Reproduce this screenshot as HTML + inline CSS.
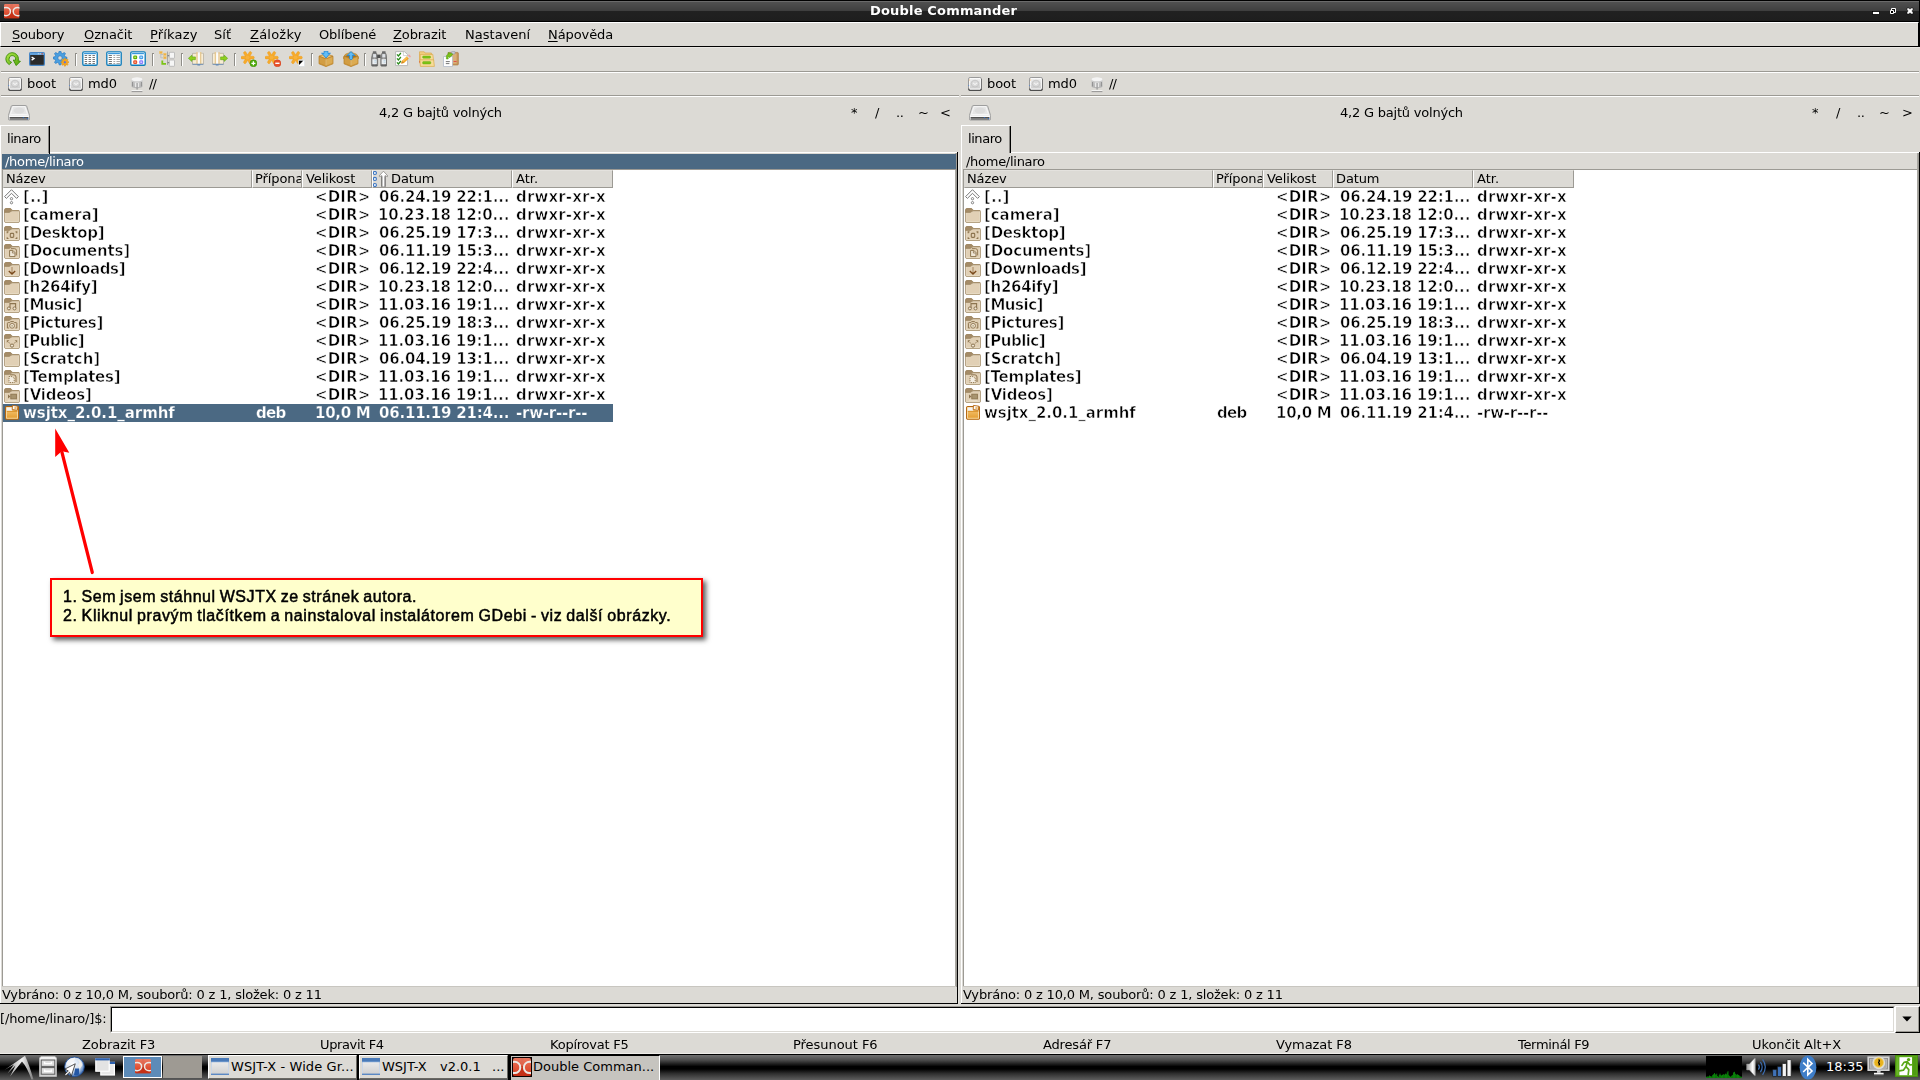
<!DOCTYPE html>
<html lang="cs"><head><meta charset="utf-8"><title>Double Commander</title>
<style>
html,body{margin:0;padding:0;}
body{width:1920px;height:1080px;overflow:hidden;background:#dcdad5;position:relative;font-family:"DejaVu Sans","Liberation Sans",sans-serif;font-size:13px;color:#000;}
div,span,svg{position:absolute;box-sizing:border-box;}
#root{left:0;top:0;width:1920px;height:1080px;}
.t,.b,.tb{will-change:transform;white-space:pre;}
.t{line-height:16px;height:16px;}
.tb{line-height:16px;height:16px;font-weight:bold;}
.b{font-weight:bold;font-size:15px;line-height:18px;height:18px;top:0;-webkit-text-stroke:0.6px #fff;}
.b.w{-webkit-text-stroke:0.25px #4b6983;}
.row{height:18px;overflow:hidden;}
.w{color:#fff;}
.hc{top:170px;height:18px;border-top:1px solid #e4e2de;border-left:1px solid #fff;border-right:1px solid #9c9a94;border-bottom:1px solid #9c9a94;background:#dcdad5;overflow:hidden;}
u{text-decoration:underline;text-decoration-thickness:1px;text-underline-offset:2px;text-decoration-skip-ink:none;}
.tk{white-space:pre;line-height:16px;height:16px;}
.an{font-family:"Liberation Sans",sans-serif;font-size:16px;line-height:19px;height:19px;-webkit-text-stroke:0.5px #000;word-spacing:-1px;}
</style></head>
<body>
<div id="root">
<div style="left:0px;top:0px;width:1920px;height:22px;background:linear-gradient(#000 0,#000 1px,#6a6a6a 1px,#6a6a6a 2px,#505050 2px,#3e3e3e 11px,#212121 11px,#1e1e1e 21px,#000 21px);"></div>
<svg style="left:4px;top:4px;" width="15.5" height="14.5" viewBox="0 0 20 20" preserveAspectRatio="none"><defs><linearGradient id="dc1g_1" x1="0" y1="0" x2="0" y2="1"><stop offset="0" stop-color="#ea7a63"/><stop offset="0.5" stop-color="#e2583c"/><stop offset="1" stop-color="#d2381c"/></linearGradient><clipPath id="dc1c_1"><rect x="0" y="0" width="20" height="20" rx="1.8"/></clipPath></defs><g clip-path="url(#dc1c_1)"><rect x="0" y="0" width="20" height="20" fill="url(#dc1g_1)"/><path d="M0,20 L10,8.5 L20,20 Z" fill="#c22e14" opacity="0.85"/><path d="M10,0 V8.5" stroke="#d86a55" stroke-width="3" opacity="0.5"/><circle cx="2.6" cy="10.4" r="5.7" fill="none" stroke="#ece8e4" stroke-width="2"/><circle cx="17.6" cy="10.4" r="5.7" fill="none" stroke="#ece8e4" stroke-width="2"/></g></svg>
<div class="tb w" style="left:870px;top:3px;letter-spacing:0.180px;">Double Commander</div>
<svg style="left:1860px;top:0px;" width="60" height="22" viewBox="1860 0 60 22"><rect x="1872.5" y="11.5" width="7" height="3" fill="#fff" stroke="#000" stroke-width="0.8"/><path d="M1891.5,8.5 h4 v4 h-4 z" fill="#111" stroke="#fff" stroke-width="1"/><path d="M1890.5,10.5 h3 v3 h-3 z" fill="#000" stroke="#fff" stroke-width="1"/><path d="M1907,8 h2 l1,1.2 l1,-1.2 h2 v2 l-1.2,1 l1.2,1 v2 h-2 l-1,-1.2 l-1,1.2 h-2 v-2 l1.2,-1 l-1.2,-1 z" fill="#fff" stroke="#000" stroke-width="0.5"/></svg>
<div style="left:1919px;top:0px;width:1px;height:47px;background:#000;"></div>
<div style="left:0px;top:22px;width:1919px;height:25px;background:#dcdad5;border-top:1px solid #fff;border-left:1px solid #fff;border-bottom:1px solid #000;border-right:1px solid #000;"></div>
<div class="t" style="left:12px;top:27px;letter-spacing:-0.220px;"><u>S</u>oubory</div>
<div class="t" style="left:84px;top:27px;letter-spacing:-0.117px;"><u>O</u>značit</div>
<div class="t" style="left:150px;top:27px;letter-spacing:0.180px;"><u>P</u>říkazy</div>
<div class="t" style="left:214px;top:27px;letter-spacing:0.016px;">Síť</div>
<div class="t" style="left:250px;top:27px;letter-spacing:0.228px;"><u>Z</u>áložky</div>
<div class="t" style="left:319px;top:27px;letter-spacing:-0.126px;">Oblíbené</div>
<div class="t" style="left:393px;top:27px;letter-spacing:-0.086px;"><u>Z</u>obrazit</div>
<div class="t" style="left:465px;top:27px;letter-spacing:0.018px;">N<u>a</u>stavení</div>
<div class="t" style="left:548px;top:27px;letter-spacing:-0.083px;"><u>N</u>ápověda</div>
<div style="left:0px;top:47px;width:1920px;height:1px;background:#e9e7e3;"></div>
<div style="left:1px;top:71px;width:1918px;height:1px;background:#9c9a94;"></div>
<div style="left:1px;top:72px;width:1918px;height:1px;background:#fff;"></div>
<svg style="left:5px;top:51px;" width="16" height="16" viewBox="0 0 16 16"><defs><linearGradient id="rg_2" x1="0" y1="0" x2="1" y2="1"><stop offset="0" stop-color="#b5e94a"/><stop offset="1" stop-color="#4fa40a"/></linearGradient></defs><path d="M4.3,13.6 A6.3,6.3 0 1 1 13.2,9.8 L15.4,10.3 L11.2,14.6 L8.3,9 L10.4,9.4 A3.3,3.3 0 1 0 6.6,11.2 Z" fill="url(#rg_2)" stroke="#3c8d07" stroke-width="0.9" stroke-linejoin="round"/></svg>
<svg style="left:29px;top:51px;" width="16" height="16" viewBox="0 0 16 16"><rect x="0.5" y="1.5" width="15" height="13" rx="0.8" fill="#63a3dd" stroke="#4a86c4"/><rect x="1.2" y="4" width="13.6" height="9.8" fill="#2a2a2a"/><rect x="12.6" y="2.2" width="1.2" height="1.2" fill="#e84a2a"/><rect x="10.7" y="2.2" width="1" height="1.1" fill="#cfe3f5"/><rect x="8.8" y="2.2" width="1" height="1.1" fill="#cfe3f5"/><path d="M2.6,6 L5,7.6 L2.6,9.2" stroke="#fff" stroke-width="1.4" fill="none"/></svg>
<svg style="left:53px;top:51px;" width="16" height="16" viewBox="0 0 16 16"><path d="M13.97,6.31 L13.97,7.69 L11.78,8.45 L11.41,9.36 L12.41,11.44 L11.44,12.41 L9.36,11.41 L8.45,11.78 L7.69,13.97 L6.31,13.97 L5.55,11.78 L4.64,11.41 L2.56,12.41 L1.59,11.44 L2.59,9.36 L2.22,8.45 L0.03,7.69 L0.03,6.31 L2.22,5.55 L2.59,4.64 L1.59,2.56 L2.56,1.59 L4.64,2.59 L5.55,2.22 L6.31,0.03 L7.69,0.03 L8.45,2.22 L9.36,2.59 L11.44,1.59 L12.41,2.56 L11.41,4.64 L11.78,5.55 Z M4.80,7.00 a2.20,2.20 0 1 0 4.40,0 a2.20,2.20 0 1 0 -4.40,0 Z" fill="#4a9fe0" stroke="#2b78c2" stroke-width="0.7" fill-rule="evenodd"/><path d="M15.88,10.81 L15.88,11.59 L14.58,12.01 L14.37,12.52 L14.99,13.74 L14.44,14.29 L13.22,13.67 L12.71,13.88 L12.29,15.18 L11.51,15.18 L11.09,13.88 L10.58,13.67 L9.36,14.29 L8.81,13.74 L9.43,12.52 L9.22,12.01 L7.92,11.59 L7.92,10.81 L9.22,10.39 L9.43,9.88 L8.81,8.66 L9.36,8.11 L10.58,8.73 L11.09,8.52 L11.51,7.22 L12.29,7.22 L12.71,8.52 L13.22,8.73 L14.44,8.11 L14.99,8.66 L14.37,9.88 L14.58,10.39 Z M10.90,11.20 a1.00,1.00 0 1 0 2.00,0 a1.00,1.00 0 1 0 -2.00,0 Z" fill="#f5a623" stroke="#e08e0b" stroke-width="0.5" fill-rule="evenodd"/><circle cx="11.9" cy="11.2" r="1" fill="#5a6ee8"/></svg>
<svg style="left:82px;top:51px;" width="16" height="16" viewBox="0 0 16 16"><rect x="0.8" y="0.8" width="14.4" height="13.4" rx="1.2" fill="#fff" stroke="#0f7cba" stroke-width="1.35"/><rect x="1.6" y="1.6" width="12.8" height="1.8" fill="#9fd4f2"/><rect x="2.2" y="2.1" width="11.6" height="0.9" fill="#2f8fd8"/><rect x="2.6" y="4.2" width="2.6" height="0.9" rx="0.4" fill="#4a4a4a"/><rect x="6.5" y="4.2" width="2.6" height="0.9" rx="0.4" fill="#4a4a4a"/><rect x="10.4" y="4.2" width="2.6" height="0.9" rx="0.4" fill="#4a4a4a"/><rect x="2.6" y="6.2" width="2.6" height="0.9" rx="0.4" fill="#4a4a4a"/><rect x="6.5" y="6.2" width="2.6" height="0.9" rx="0.4" fill="#4a4a4a"/><rect x="10.4" y="6.2" width="2.6" height="0.9" rx="0.4" fill="#4a4a4a"/><rect x="2.6" y="8.2" width="2.6" height="0.9" rx="0.4" fill="#4a4a4a"/><rect x="6.5" y="8.2" width="2.6" height="0.9" rx="0.4" fill="#4a4a4a"/><rect x="10.4" y="8.2" width="2.6" height="0.9" rx="0.4" fill="#4a4a4a"/><rect x="2.6" y="10.2" width="2.6" height="0.9" rx="0.4" fill="#4a4a4a"/><rect x="6.5" y="10.2" width="2.6" height="0.9" rx="0.4" fill="#4a4a4a"/><rect x="10.4" y="10.2" width="2.6" height="0.9" rx="0.4" fill="#4a4a4a"/><rect x="2.6" y="12.2" width="2.6" height="0.9" rx="0.4" fill="#4a4a4a"/><rect x="6.5" y="12.2" width="2.6" height="0.9" rx="0.4" fill="#4a4a4a"/><rect x="10.4" y="12.2" width="2.6" height="0.9" rx="0.4" fill="#4a4a4a"/></svg>
<svg style="left:106px;top:51px;" width="16" height="16" viewBox="0 0 16 16"><rect x="0.8" y="0.8" width="14.4" height="13.4" rx="1.2" fill="#fff" stroke="#0f7cba" stroke-width="1.35"/><rect x="1.6" y="1.6" width="12.8" height="1.8" fill="#9fd4f2"/><rect x="2.2" y="2.1" width="11.6" height="0.9" fill="#2f8fd8"/><rect x="2.6" y="4.2" width="3.4" height="0.9" rx="0.4" fill="#4a4a4a"/><rect x="7.3" y="4.2" width="2" height="0.9" rx="0.4" fill="#8a8a8a"/><rect x="10.4" y="4.2" width="3.6" height="0.9" rx="0.4" fill="#8a8a8a"/><rect x="2.6" y="6.2" width="3.4" height="0.9" rx="0.4" fill="#4a4a4a"/><rect x="7.3" y="6.2" width="2" height="0.9" rx="0.4" fill="#8a8a8a"/><rect x="10.4" y="6.2" width="3.6" height="0.9" rx="0.4" fill="#8a8a8a"/><rect x="2.6" y="8.2" width="3.4" height="0.9" rx="0.4" fill="#4a4a4a"/><rect x="7.3" y="8.2" width="2" height="0.9" rx="0.4" fill="#8a8a8a"/><rect x="10.4" y="8.2" width="3.6" height="0.9" rx="0.4" fill="#8a8a8a"/><rect x="2.6" y="10.2" width="3.4" height="0.9" rx="0.4" fill="#4a4a4a"/><rect x="7.3" y="10.2" width="2" height="0.9" rx="0.4" fill="#8a8a8a"/><rect x="10.4" y="10.2" width="3.6" height="0.9" rx="0.4" fill="#8a8a8a"/><rect x="2.6" y="12.2" width="3.4" height="0.9" rx="0.4" fill="#4a4a4a"/><rect x="7.3" y="12.2" width="2" height="0.9" rx="0.4" fill="#8a8a8a"/><rect x="10.4" y="12.2" width="3.6" height="0.9" rx="0.4" fill="#8a8a8a"/></svg>
<svg style="left:130px;top:51px;" width="16" height="16" viewBox="0 0 16 16"><rect x="0.8" y="0.8" width="14.4" height="13.4" rx="1.2" fill="#fff" stroke="#0f7cba" stroke-width="1.35"/><rect x="1.6" y="1.6" width="12.8" height="1.8" fill="#9fd4f2"/><rect x="2.2" y="2.1" width="11.6" height="0.9" fill="#2f8fd8"/><rect x="3.2" y="4.4" width="4" height="3.8" rx="1.3" fill="#5fb100"/><rect x="4.3" y="5.6" width="1.8" height="1.4" fill="#bfe36a"/><rect x="9.2" y="4.4" width="4" height="3.8" rx="1.3" fill="#4a9ee6"/><rect x="10.3" y="5.6" width="1.8" height="1.4" fill="#a8dcff"/><rect x="3.2" y="9.3" width="4" height="3.8" rx="1.3" fill="#e8512a"/><rect x="4.3" y="10.5" width="1.8" height="1.4" fill="#f5a58a"/><rect x="9.2" y="9.3" width="4" height="3.8" rx="1.3" fill="#8a7bff"/><rect x="10.3" y="10.5" width="1.8" height="1.4" fill="#d6d0ff"/></svg>
<svg style="left:159px;top:51px;" width="16" height="16" viewBox="0 0 16 16"><rect x="0.4" y="0.3" width="2.8" height="2.4" fill="#f3b03f" stroke="#e9c77a" stroke-width="0.5"/><rect x="4.6" y="2.2" width="2.6" height="2.3" fill="#f3b03f" stroke="#e9c77a" stroke-width="0.5"/><rect x="4.6" y="5.6" width="2.6" height="2.3" fill="#f3b03f" stroke="#e9c77a" stroke-width="0.5"/><path d="M1.8,2.8 V6.8 H4.4 M1.8,3.5 H4.4" stroke="#b9b9b9" stroke-width="0.8" fill="none"/><path d="M3.3,9.5 V12.9 H7" stroke="#7cc416" stroke-width="1.8" fill="none"/><path d="M8.5,0.5 V14" stroke="#9a9a9a" stroke-width="0.8"/><rect x="10.3" y="1.3" width="5.2" height="6" rx="0.6" fill="#f6f6f6" stroke="#b2b2b2" stroke-width="0.8"/><rect x="10.3" y="9" width="5.2" height="6.3" rx="0.6" fill="#f6f6f6" stroke="#b2b2b2" stroke-width="0.8"/><rect x="8.6" y="4.3" width="1.6" height="0.9" fill="#666"/><rect x="8.6" y="11.3" width="1.6" height="0.9" fill="#666"/></svg>
<svg style="left:188px;top:51px;" width="16" height="16" viewBox="0 0 16 16"><path d="M4.6,2.4 H15.3 V13 H4.6 Z" fill="#f1dfbb" stroke="#a9a295" stroke-width="0.7"/><rect x="8.2" y="1" width="1.6" height="12" fill="#e6c994"/><rect x="11.9" y="1" width="1.6" height="12" fill="#e6c994"/><rect x="9.8" y="1.4" width="2.1" height="11.4" fill="#fbfbfb"/><rect x="13.5" y="2.6" width="1.4" height="10" fill="#f9efdb"/><rect x="5" y="2.8" width="3.2" height="10" fill="#f7ecd2"/><path d="M4.4,13.3 H15.4" stroke="#6f8fb4" stroke-width="1"/><path d="M9.4,14 H12.2" stroke="#4f7fb5" stroke-width="0.9"/><path d="M0.4,7.3 L3.8,4.2 V5.9 H7.4 V8.7 H3.8 V10.4 Z" fill="#8fd01e" stroke="#5ba60c" stroke-width="0.6" stroke-linejoin="round"/></svg>
<svg style="left:212px;top:51px;" width="16" height="16" viewBox="0 0 16 16"><g transform="translate(16,0) scale(-1,1)"><path d="M4.6,2.4 H15.3 V13 H4.6 Z" fill="#f1dfbb" stroke="#a9a295" stroke-width="0.7"/><rect x="8.2" y="1" width="1.6" height="12" fill="#e6c994"/><rect x="11.9" y="1" width="1.6" height="12" fill="#e6c994"/><rect x="9.8" y="1.4" width="2.1" height="11.4" fill="#fbfbfb"/><rect x="13.5" y="2.6" width="1.4" height="10" fill="#f9efdb"/><rect x="5" y="2.8" width="3.2" height="10" fill="#f7ecd2"/><path d="M4.4,13.3 H15.4" stroke="#6f8fb4" stroke-width="1"/><path d="M9.4,14 H12.2" stroke="#4f7fb5" stroke-width="0.9"/><path d="M0.4,7.3 L3.8,4.2 V5.9 H7.4 V8.7 H3.8 V10.4 Z" fill="#8fd01e" stroke="#5ba60c" stroke-width="0.6" stroke-linejoin="round"/></g></svg>
<svg style="left:241px;top:51px;" width="16" height="16" viewBox="0 0 16 16"><rect x="-1.35" y="-6.7" width="2.7" height="6.2" rx="1.3" fill="#f6ab2c" stroke="#ec9a1c" stroke-width="0.4" transform="translate(6.6,6.6) rotate(30)"/><rect x="-1.35" y="-6.7" width="2.7" height="6.2" rx="1.3" fill="#f6ab2c" stroke="#ec9a1c" stroke-width="0.4" transform="translate(6.6,6.6) rotate(90)"/><rect x="-1.35" y="-6.7" width="2.7" height="6.2" rx="1.3" fill="#f6ab2c" stroke="#ec9a1c" stroke-width="0.4" transform="translate(6.6,6.6) rotate(150)"/><rect x="-1.35" y="-6.7" width="2.7" height="6.2" rx="1.3" fill="#f6ab2c" stroke="#ec9a1c" stroke-width="0.4" transform="translate(6.6,6.6) rotate(210)"/><rect x="-1.35" y="-6.7" width="2.7" height="6.2" rx="1.3" fill="#f6ab2c" stroke="#ec9a1c" stroke-width="0.4" transform="translate(6.6,6.6) rotate(270)"/><rect x="-1.35" y="-6.7" width="2.7" height="6.2" rx="1.3" fill="#f6ab2c" stroke="#ec9a1c" stroke-width="0.4" transform="translate(6.6,6.6) rotate(330)"/><circle cx="6.6" cy="6.6" r="2" fill="#f7b13c"/><circle cx="12.4" cy="12.3" r="3.5" fill="#4eaa0c" stroke="#3d8d07" stroke-width="0.5"/><path d="M10.4,12.3 h4 M12.4,10.3 v4" stroke="#fff" stroke-width="1.3"/></svg>
<svg style="left:265px;top:51px;" width="16" height="16" viewBox="0 0 16 16"><rect x="-1.35" y="-6.7" width="2.7" height="6.2" rx="1.3" fill="#f6ab2c" stroke="#ec9a1c" stroke-width="0.4" transform="translate(6.6,6.6) rotate(30)"/><rect x="-1.35" y="-6.7" width="2.7" height="6.2" rx="1.3" fill="#f6ab2c" stroke="#ec9a1c" stroke-width="0.4" transform="translate(6.6,6.6) rotate(90)"/><rect x="-1.35" y="-6.7" width="2.7" height="6.2" rx="1.3" fill="#f6ab2c" stroke="#ec9a1c" stroke-width="0.4" transform="translate(6.6,6.6) rotate(150)"/><rect x="-1.35" y="-6.7" width="2.7" height="6.2" rx="1.3" fill="#f6ab2c" stroke="#ec9a1c" stroke-width="0.4" transform="translate(6.6,6.6) rotate(210)"/><rect x="-1.35" y="-6.7" width="2.7" height="6.2" rx="1.3" fill="#f6ab2c" stroke="#ec9a1c" stroke-width="0.4" transform="translate(6.6,6.6) rotate(270)"/><rect x="-1.35" y="-6.7" width="2.7" height="6.2" rx="1.3" fill="#f6ab2c" stroke="#ec9a1c" stroke-width="0.4" transform="translate(6.6,6.6) rotate(330)"/><circle cx="6.6" cy="6.6" r="2" fill="#f7b13c"/><circle cx="12.4" cy="12.3" r="3.5" fill="#e8512a" stroke="#cf3d18" stroke-width="0.5"/><path d="M10.3,12.3 h4.2" stroke="#fff" stroke-width="1.4"/></svg>
<svg style="left:289px;top:51px;" width="16" height="16" viewBox="0 0 16 16"><rect x="-1.35" y="-6.7" width="2.7" height="6.2" rx="1.3" fill="#f6ab2c" stroke="#ec9a1c" stroke-width="0.4" transform="translate(6.6,6.6) rotate(30)"/><rect x="-1.35" y="-6.7" width="2.7" height="6.2" rx="1.3" fill="#f6ab2c" stroke="#ec9a1c" stroke-width="0.4" transform="translate(6.6,6.6) rotate(90)"/><rect x="-1.35" y="-6.7" width="2.7" height="6.2" rx="1.3" fill="#f6ab2c" stroke="#ec9a1c" stroke-width="0.4" transform="translate(6.6,6.6) rotate(150)"/><rect x="-1.35" y="-6.7" width="2.7" height="6.2" rx="1.3" fill="#f6ab2c" stroke="#ec9a1c" stroke-width="0.4" transform="translate(6.6,6.6) rotate(210)"/><rect x="-1.35" y="-6.7" width="2.7" height="6.2" rx="1.3" fill="#f6ab2c" stroke="#ec9a1c" stroke-width="0.4" transform="translate(6.6,6.6) rotate(270)"/><rect x="-1.35" y="-6.7" width="2.7" height="6.2" rx="1.3" fill="#f6ab2c" stroke="#ec9a1c" stroke-width="0.4" transform="translate(6.6,6.6) rotate(330)"/><circle cx="6.6" cy="6.6" r="2" fill="#f7b13c"/><rect x="9.6" y="9.3" width="6" height="6" fill="#fff" stroke="#cfd8e0" stroke-width="0.5"/><path d="M10,9.7 h4.2 l-4.2,4.2 z" fill="#000"/></svg>
<svg style="left:318px;top:51px;" width="16" height="16" viewBox="0 0 16 16"><path d="M1,5.2 L8,2.6 L15,5.2 L8,8 Z" fill="#e8c07a" stroke="#b47c24" stroke-width="0.7"/><path d="M1,5.2 L8,8 L8,15.6 L1,12.8 Z" fill="#d29d43" stroke="#b47c24" stroke-width="0.7"/><path d="M15,5.2 L8,8 L8,15.6 L15,12.8 Z" fill="#dcab52" stroke="#b47c24" stroke-width="0.7"/><path d="M8,8.2 V15.4" stroke="#f0cf8c" stroke-width="0.9"/><path d="M1.6,12.4 L8,15 L14.4,12.4" stroke="#c48a2c" stroke-width="0.6" fill="none"/><path d="M6,0.3 H7.4 L8,1 L8.6,0.3 H10 V2.6 L12.4,2 L8,7 L3.6,2 L6,2.6 Z" fill="#62bcf6" stroke="#1f86d6" stroke-width="0.8" stroke-linejoin="round"/></svg>
<svg style="left:343px;top:51px;" width="16" height="16" viewBox="0 0 16 16"><path d="M1,5.2 L8,2.8 L15,5.2 L8,8 Z" fill="#a8741e"/><path d="M1,5.2 L0.1,7.3 L7,10 L8,8 Z M15,5.2 L15.9,7.3 L9,10 L8,8 Z" fill="#e3b45c" stroke="#b47c24" stroke-width="0.6"/><path d="M1,5.2 L2.6,3 L9.2,0.9 L8,2.8 Z M15,5.2 L13.4,3 L6.8,0.9 L8,2.8 Z" fill="#d6a142" stroke="#b47c24" stroke-width="0.5"/><path d="M1,5.2 L8,8 L8,15.6 L1,12.8 Z" fill="#d29d43" stroke="#b47c24" stroke-width="0.7"/><path d="M15,5.2 L8,8 L8,15.6 L15,12.8 Z" fill="#dcab52" stroke="#b47c24" stroke-width="0.7"/><path d="M8,8.2 V15.4" stroke="#f0cf8c" stroke-width="0.9"/><path d="M1.6,12.4 L8,15 L14.4,12.4" stroke="#c48a2c" stroke-width="0.6" fill="none"/><path d="M8,0.6 L12,4.6 L9.4,4.3 V7.8 L8,9 L6.6,7.8 V4.3 L4,4.6 Z" fill="#62bcf6" stroke="#1f86d6" stroke-width="0.8" stroke-linejoin="round"/></svg>
<svg style="left:371px;top:51px;" width="16" height="16" viewBox="0 0 16 16"><defs><linearGradient id="bn_3" x1="0" y1="0" x2="1" y2="0"><stop offset="0" stop-color="#7a7a7a"/><stop offset="0.5" stop-color="#a6a6a6"/><stop offset="1" stop-color="#6a6a6a"/></linearGradient></defs><rect x="1.8" y="0.3" width="3.6" height="2.4" rx="0.5" fill="#6a6a6a"/><path d="M1.4,2.6 h4.4 l0.9,4.4 v7.2 q0,1.1 -1.1,1.1 h-4 q-1.1,0 -1.1,-1.1 v-7.2 z" fill="url(#bn_3)" stroke="#5e5e5e" stroke-width="0.5"/><rect x="2.1" y="3.1" width="3" height="3.2" fill="#e4e8ec" opacity="0.9"/><rect x="1.4" y="8.2" width="4.4" height="5" fill="#eef1f4" opacity="0.95"/><path d="M3.4,9.6 h2 M3.4,11.2 h2" stroke="#9fc4dc" stroke-width="0.6"/><rect x="1.1" y="13.6" width="5" height="1.2" fill="#5a5a5a"/><rect x="11" y="0.3" width="3.6" height="2.4" rx="0.5" fill="#6a6a6a"/><path d="M10.6,2.6 h4.4 l0.9,4.4 v7.2 q0,1.1 -1.1,1.1 h-4 q-1.1,0 -1.1,-1.1 v-7.2 z" fill="url(#bn_3)" stroke="#5e5e5e" stroke-width="0.5"/><rect x="11.3" y="3.1" width="3" height="3.2" fill="#e4e8ec" opacity="0.9"/><rect x="10.6" y="8.2" width="4.4" height="5" fill="#eef1f4" opacity="0.95"/><path d="M12.6,9.6 h2 M12.6,11.2 h2" stroke="#9fc4dc" stroke-width="0.6"/><rect x="10.3" y="13.6" width="5" height="1.2" fill="#5a5a5a"/><rect x="6.2" y="3.6" width="3.4" height="3.4" fill="#4e4e4e"/></svg>
<svg style="left:395px;top:51px;" width="16" height="16" viewBox="0 0 16 16"><path d="M0.6,0.6 H9.4 L12.6,3.6 V14.6 H0.6 Z" fill="#fff" stroke="#b9b9b9" stroke-width="1"/><path d="M8.4,1 V4.6 H12" fill="none" stroke="#c8c8c8" stroke-width="0.8"/><path d="M2,3.4 l1.4,1.6 l2.5,-3" stroke="#2b8a1a" stroke-width="1.3" fill="none"/><path d="M2,7.4 l1.4,1.6 l2.5,-3" stroke="#2b8a1a" stroke-width="1.3" fill="none"/><path d="M2,11.4 l1.4,1.6 l2.5,-3" stroke="#2b8a1a" stroke-width="1.3" fill="none"/><g transform="translate(6.2,12.4) rotate(-42)"><path d="M0,0 L2.4,-1.5 H9 V1.5 H2.4 Z" fill="#f5a623"/><path d="M0,0 L2.4,-1.5 V1.5 Z" fill="#c9832a"/><rect x="9" y="-1.5" width="1.2" height="3" fill="#d8dde2"/><rect x="10.2" y="-1.5" width="1.8" height="3" rx="0.8" fill="#f0a3a3"/><path d="M2.4,-0.4 H9" stroke="#fbd27d" stroke-width="0.8"/></g></svg>
<svg style="left:419px;top:51px;" width="16" height="16" viewBox="0 0 16 16"><path d="M0.5,0.8 H5.2 L6,2 H12.4 V12 H0.5 Z" fill="#f3d083" stroke="#dba94a" stroke-width="0.7"/><path d="M1.2,3.4 H13.8 L14.6,9.6 H1.2 Z" fill="#f7dc98" stroke="#dba94a" stroke-width="0.7"/><rect x="3.6" y="5" width="8" height="2.2" rx="0.8" fill="#7cc416" stroke="#5fa50c" stroke-width="0.4"/><path d="M0.8,8.8 H14.6 L15.4,15.4 H1.4 Z" fill="#f7dc98" stroke="#dba94a" stroke-width="0.7"/><rect x="3.6" y="10.6" width="8.2" height="2.4" rx="0.8" fill="#7cc416" stroke="#5fa50c" stroke-width="0.4"/><path d="M0.6,10.2 v1.2" stroke="#e0524a" stroke-width="0.8"/></svg>
<svg style="left:443px;top:51px;" width="16" height="16" viewBox="0 0 16 16"><rect x="5" y="1.4" width="10.4" height="12.6" rx="1" fill="#c8965a" stroke="#a8763a" stroke-width="0.6"/><rect x="7" y="2.6" width="6.6" height="10" fill="#d9b07a"/><rect x="8.6" y="0.4" width="3.4" height="2.6" rx="0.8" fill="#c9ccd4" stroke="#8f96a8" stroke-width="0.6"/><rect x="10.6" y="10" width="3" height="1" fill="#e0524a"/><rect x="0.6" y="5.6" width="8.8" height="9.8" fill="#fff" stroke="#b4bccb" stroke-width="0.8"/><path d="M2.8,10.6 h4 M2.8,12.6 h3.6" stroke="#666" stroke-width="0.9"/><path d="M3.4,8 V5.2 Q3.4,3.4 5.4,3.4 L5,1.6 L9.8,3 L6.6,6.8 L6.2,5.2 Q5.2,5.2 5.2,6.2 V8 Z" fill="#7cc416" stroke="#4c9a0a" stroke-width="0.5" stroke-linejoin="round"/></svg>
<div style="left:75px;top:53px;width:1px;height:13px;background:#8f8d88;"></div><div style="left:76px;top:54px;width:1px;height:12px;background:#fff;"></div><div style="left:75px;top:53px;width:2px;height:1px;background:#8f8d88;"></div>
<div style="left:152px;top:53px;width:1px;height:13px;background:#8f8d88;"></div><div style="left:153px;top:54px;width:1px;height:12px;background:#fff;"></div><div style="left:152px;top:53px;width:2px;height:1px;background:#8f8d88;"></div>
<div style="left:181px;top:53px;width:1px;height:13px;background:#8f8d88;"></div><div style="left:182px;top:54px;width:1px;height:12px;background:#fff;"></div><div style="left:181px;top:53px;width:2px;height:1px;background:#8f8d88;"></div>
<div style="left:234px;top:53px;width:1px;height:13px;background:#8f8d88;"></div><div style="left:235px;top:54px;width:1px;height:12px;background:#fff;"></div><div style="left:234px;top:53px;width:2px;height:1px;background:#8f8d88;"></div>
<div style="left:311px;top:53px;width:1px;height:13px;background:#8f8d88;"></div><div style="left:312px;top:54px;width:1px;height:12px;background:#fff;"></div><div style="left:311px;top:53px;width:2px;height:1px;background:#8f8d88;"></div>
<div style="left:364px;top:53px;width:1px;height:13px;background:#8f8d88;"></div><div style="left:365px;top:54px;width:1px;height:12px;background:#fff;"></div><div style="left:364px;top:53px;width:2px;height:1px;background:#8f8d88;"></div>
<svg style="left:8px;top:77px;" width="14" height="14" viewBox="0 0 14 14"><defs><linearGradient id="hs_4" x1="0" y1="0" x2="0" y2="1"><stop offset="0" stop-color="#efefef"/><stop offset="1" stop-color="#cdcdcd"/></linearGradient></defs><rect x="0.5" y="0.5" width="13" height="13" rx="1.6" fill="#fdfdfd" stroke="#9a9a9a"/><path d="M0.7,11.4 Q0.7,13.4 2.2,13.4 H11.8 Q13.3,13.4 13.3,11.4" fill="none" stroke="#4e4e4e" stroke-width="1.3"/><path d="M13.5,2 V11.6" stroke="#6e6e6e" stroke-width="0.9"/><rect x="1.8" y="1.8" width="10.4" height="9.8" rx="0.8" fill="url(#hs_4)"/><ellipse cx="7" cy="6.6" rx="3.8" ry="3.4" fill="#d9d9d9" stroke="#bdbdbd" stroke-width="0.7"/><path d="M5,5.8 L7,7.6 L9,5.8" stroke="#f4f4f4" stroke-width="1.1" fill="none"/><rect x="1.2" y="2.6" width="0.8" height="0.8" fill="#e8a04a"/><rect x="0.2" y="8" width="0.9" height="1" fill="#5a8ad0"/></svg>
<div class="t" style="left:27px;top:76px;letter-spacing:-0.089px;">boot</div>
<svg style="left:69px;top:77px;" width="14" height="14" viewBox="0 0 14 14"><defs><linearGradient id="hs_5" x1="0" y1="0" x2="0" y2="1"><stop offset="0" stop-color="#efefef"/><stop offset="1" stop-color="#cdcdcd"/></linearGradient></defs><rect x="0.5" y="0.5" width="13" height="13" rx="1.6" fill="#fdfdfd" stroke="#9a9a9a"/><path d="M0.7,11.4 Q0.7,13.4 2.2,13.4 H11.8 Q13.3,13.4 13.3,11.4" fill="none" stroke="#4e4e4e" stroke-width="1.3"/><path d="M13.5,2 V11.6" stroke="#6e6e6e" stroke-width="0.9"/><rect x="1.8" y="1.8" width="10.4" height="9.8" rx="0.8" fill="url(#hs_5)"/><ellipse cx="7" cy="6.6" rx="3.8" ry="3.4" fill="#d9d9d9" stroke="#bdbdbd" stroke-width="0.7"/><path d="M5,5.8 L7,7.6 L9,5.8" stroke="#f4f4f4" stroke-width="1.1" fill="none"/><rect x="1.2" y="2.6" width="0.8" height="0.8" fill="#e8a04a"/><rect x="0.2" y="8" width="0.9" height="1" fill="#5a8ad0"/></svg>
<div class="t" style="left:88px;top:76px;letter-spacing:-0.094px;">md0</div>
<svg style="left:131px;top:76.6px;" width="12" height="16" viewBox="0 0 12 16"><defs><linearGradient id="ng_6" x1="0" y1="0" x2="0" y2="1"><stop offset="0" stop-color="#f6f6f6"/><stop offset="0.35" stop-color="#c9c9c9"/><stop offset="1" stop-color="#b4b4b4"/></linearGradient></defs><path d="M0.4,2.4 Q0.4,0.4 6,0.4 Q11.6,0.4 11.6,2.4 V9 Q11.6,11 6,11.4 Q0.4,11 0.4,9 Z" fill="url(#ng_6)"/><ellipse cx="6" cy="2.4" rx="5.2" ry="1.8" fill="#f4f4f4"/><path d="M1.6,5 V9.4 M10.4,5 V9.4" stroke="#8e8e8e" stroke-width="1"/><rect x="4" y="5.6" width="4" height="4.4" fill="#e9e9e9"/><rect x="5.4" y="6" width="1.4" height="6.6" fill="#a4a4a4"/><rect x="0.6" y="13.2" width="10.8" height="1" fill="#fbfbfb"/><rect x="0.6" y="14.2" width="10.8" height="0.9" fill="#8a8a8a"/></svg>
<div class="t" style="left:149px;top:76px;letter-spacing:-0.766px;">//</div>
<svg style="left:968px;top:77px;" width="14" height="14" viewBox="0 0 14 14"><defs><linearGradient id="hs_7" x1="0" y1="0" x2="0" y2="1"><stop offset="0" stop-color="#efefef"/><stop offset="1" stop-color="#cdcdcd"/></linearGradient></defs><rect x="0.5" y="0.5" width="13" height="13" rx="1.6" fill="#fdfdfd" stroke="#9a9a9a"/><path d="M0.7,11.4 Q0.7,13.4 2.2,13.4 H11.8 Q13.3,13.4 13.3,11.4" fill="none" stroke="#4e4e4e" stroke-width="1.3"/><path d="M13.5,2 V11.6" stroke="#6e6e6e" stroke-width="0.9"/><rect x="1.8" y="1.8" width="10.4" height="9.8" rx="0.8" fill="url(#hs_7)"/><ellipse cx="7" cy="6.6" rx="3.8" ry="3.4" fill="#d9d9d9" stroke="#bdbdbd" stroke-width="0.7"/><path d="M5,5.8 L7,7.6 L9,5.8" stroke="#f4f4f4" stroke-width="1.1" fill="none"/><rect x="1.2" y="2.6" width="0.8" height="0.8" fill="#e8a04a"/><rect x="0.2" y="8" width="0.9" height="1" fill="#5a8ad0"/></svg>
<div class="t" style="left:987px;top:76px;letter-spacing:-0.089px;">boot</div>
<svg style="left:1029px;top:77px;" width="14" height="14" viewBox="0 0 14 14"><defs><linearGradient id="hs_8" x1="0" y1="0" x2="0" y2="1"><stop offset="0" stop-color="#efefef"/><stop offset="1" stop-color="#cdcdcd"/></linearGradient></defs><rect x="0.5" y="0.5" width="13" height="13" rx="1.6" fill="#fdfdfd" stroke="#9a9a9a"/><path d="M0.7,11.4 Q0.7,13.4 2.2,13.4 H11.8 Q13.3,13.4 13.3,11.4" fill="none" stroke="#4e4e4e" stroke-width="1.3"/><path d="M13.5,2 V11.6" stroke="#6e6e6e" stroke-width="0.9"/><rect x="1.8" y="1.8" width="10.4" height="9.8" rx="0.8" fill="url(#hs_8)"/><ellipse cx="7" cy="6.6" rx="3.8" ry="3.4" fill="#d9d9d9" stroke="#bdbdbd" stroke-width="0.7"/><path d="M5,5.8 L7,7.6 L9,5.8" stroke="#f4f4f4" stroke-width="1.1" fill="none"/><rect x="1.2" y="2.6" width="0.8" height="0.8" fill="#e8a04a"/><rect x="0.2" y="8" width="0.9" height="1" fill="#5a8ad0"/></svg>
<div class="t" style="left:1048px;top:76px;letter-spacing:-0.094px;">md0</div>
<svg style="left:1091px;top:76.6px;" width="12" height="16" viewBox="0 0 12 16"><defs><linearGradient id="ng_9" x1="0" y1="0" x2="0" y2="1"><stop offset="0" stop-color="#f6f6f6"/><stop offset="0.35" stop-color="#c9c9c9"/><stop offset="1" stop-color="#b4b4b4"/></linearGradient></defs><path d="M0.4,2.4 Q0.4,0.4 6,0.4 Q11.6,0.4 11.6,2.4 V9 Q11.6,11 6,11.4 Q0.4,11 0.4,9 Z" fill="url(#ng_9)"/><ellipse cx="6" cy="2.4" rx="5.2" ry="1.8" fill="#f4f4f4"/><path d="M1.6,5 V9.4 M10.4,5 V9.4" stroke="#8e8e8e" stroke-width="1"/><rect x="4" y="5.6" width="4" height="4.4" fill="#e9e9e9"/><rect x="5.4" y="6" width="1.4" height="6.6" fill="#a4a4a4"/><rect x="0.6" y="13.2" width="10.8" height="1" fill="#fbfbfb"/><rect x="0.6" y="14.2" width="10.8" height="0.9" fill="#8a8a8a"/></svg>
<div class="t" style="left:1109px;top:76px;letter-spacing:-0.766px;">//</div>
<div style="left:1px;top:95px;width:958px;height:1px;background:#9c9a94;"></div>
<div style="left:1px;top:96px;width:958px;height:1px;background:#fff;"></div>
<div style="left:961px;top:95px;width:958px;height:1px;background:#9c9a94;"></div>
<div style="left:961px;top:96px;width:958px;height:1px;background:#fff;"></div>
<svg style="left:8px;top:105px;" width="22" height="16" viewBox="0 0 22 16"><defs><linearGradient id="dg_10" x1="0" y1="0" x2="0" y2="1"><stop offset="0" stop-color="#dedede"/><stop offset="1" stop-color="#f2f2f2"/></linearGradient><linearGradient id="dg2_10" x1="0" y1="0" x2="0" y2="1"><stop offset="0" stop-color="#2e2e2e"/><stop offset="0.5" stop-color="#8a8a8a"/><stop offset="1" stop-color="#3a3a3a"/></linearGradient></defs><path d="M4.2,0.5 H17.8 Q18.4,0.5 18.7,1.2 L21.6,10.6 V14 Q21.6,15 20.6,15 H1.4 Q0.4,15 0.4,14 V10.6 L3.3,1.2 Q3.6,0.5 4.2,0.5 Z" fill="url(#dg_10)" stroke="#8e8e8e" stroke-width="0.8"/><path d="M5,1.6 H17 L19.6,9.6 H2.4 Z" fill="#e6e6e6" stroke="#fafafa" stroke-width="0.8"/><ellipse cx="11" cy="5.6" rx="5.4" ry="3" fill="#dcdcdc"/><rect x="1.2" y="11" width="19.6" height="1" fill="#fbfbfb"/><rect x="1.6" y="12" width="18.8" height="2.6" rx="0.6" fill="url(#dg2_10)"/><rect x="14.8" y="12.2" width="1.4" height="0.9" fill="#2c6cc4"/><rect x="18.8" y="13.2" width="1.4" height="0.9" fill="#2c6cc4"/></svg>
<div class="t" style="left:379px;top:105px;letter-spacing:-0.211px;">4,2 G bajtů volných</div>
<div class="t" style="left:851px;top:105px;">*</div>
<div class="t" style="left:875px;top:105px;">/</div>
<div class="t" style="left:896px;top:105px;letter-spacing:-0.266px;">..</div>
<div class="t" style="left:918px;top:105px;">~</div>
<div class="t" style="left:940px;top:105px;">&lt;</div>
<svg style="left:969px;top:105px;" width="22" height="16" viewBox="0 0 22 16"><defs><linearGradient id="dg_11" x1="0" y1="0" x2="0" y2="1"><stop offset="0" stop-color="#dedede"/><stop offset="1" stop-color="#f2f2f2"/></linearGradient><linearGradient id="dg2_11" x1="0" y1="0" x2="0" y2="1"><stop offset="0" stop-color="#2e2e2e"/><stop offset="0.5" stop-color="#8a8a8a"/><stop offset="1" stop-color="#3a3a3a"/></linearGradient></defs><path d="M4.2,0.5 H17.8 Q18.4,0.5 18.7,1.2 L21.6,10.6 V14 Q21.6,15 20.6,15 H1.4 Q0.4,15 0.4,14 V10.6 L3.3,1.2 Q3.6,0.5 4.2,0.5 Z" fill="url(#dg_11)" stroke="#8e8e8e" stroke-width="0.8"/><path d="M5,1.6 H17 L19.6,9.6 H2.4 Z" fill="#e6e6e6" stroke="#fafafa" stroke-width="0.8"/><ellipse cx="11" cy="5.6" rx="5.4" ry="3" fill="#dcdcdc"/><rect x="1.2" y="11" width="19.6" height="1" fill="#fbfbfb"/><rect x="1.6" y="12" width="18.8" height="2.6" rx="0.6" fill="url(#dg2_11)"/><rect x="14.8" y="12.2" width="1.4" height="0.9" fill="#2c6cc4"/><rect x="18.8" y="13.2" width="1.4" height="0.9" fill="#2c6cc4"/></svg>
<div class="t" style="left:1340px;top:105px;letter-spacing:-0.211px;">4,2 G bajtů volných</div>
<div class="t" style="left:1812px;top:105px;">*</div>
<div class="t" style="left:1836px;top:105px;">/</div>
<div class="t" style="left:1857px;top:105px;letter-spacing:-0.266px;">..</div>
<div class="t" style="left:1879px;top:105px;">~</div>
<div class="t" style="left:1902px;top:105px;">&gt;</div>
<div style="left:0px;top:125px;width:49px;height:1px;background:#fff;"></div>
<div style="left:0px;top:126px;width:1px;height:877px;background:#fff;"></div>
<div style="left:48px;top:126px;width:1px;height:27px;background:#8a8884;"></div>
<div style="left:49px;top:126px;width:1px;height:28px;background:#000;"></div>
<div class="t" style="left:7px;top:131px;letter-spacing:-0.440px;">linaro</div>
<div style="left:50px;top:152px;width:907px;height:1px;background:#fff;"></div>
<div style="left:961px;top:125px;width:49px;height:1px;background:#fff;"></div>
<div style="left:961px;top:125px;width:1px;height:28px;background:#fff;"></div>
<div style="left:961px;top:153px;width:1px;height:850px;background:#fff;"></div>
<div style="left:958px;top:153px;width:1px;height:850px;background:#e6e4df;"></div>
<div style="left:1009px;top:126px;width:1px;height:27px;background:#8a8884;"></div>
<div style="left:1010px;top:126px;width:1px;height:27px;background:#000;"></div>
<div class="t" style="left:968px;top:131px;letter-spacing:-0.440px;">linaro</div>
<div style="left:1011px;top:152px;width:908px;height:1px;background:#fff;"></div>
<div style="left:955px;top:153px;width:1px;height:834px;background:#a9a7a1;"></div>
<div style="left:956px;top:153px;width:1px;height:834px;background:#9c9a94;"></div>
<div style="left:957px;top:152px;width:1px;height:851px;background:#000;"></div>
<div style="left:1919px;top:152px;width:1px;height:851px;background:#000;"></div>
<div style="left:1918px;top:153px;width:1px;height:834px;background:#9c9a94;"></div>
<div style="left:1917px;top:153px;width:1px;height:834px;background:#a9a7a1;"></div>
<div style="left:2px;top:154px;width:954px;height:15px;background:#4b6983;"></div>
<div class="t w" style="left:5px;top:154px;letter-spacing:-0.273px;">/home/linaro</div>
<div class="t" style="left:966px;top:154px;letter-spacing:-0.273px;">/home/linaro</div>
<div style="left:2px;top:169px;width:954px;height:1px;background:#9c9a94;"></div>
<div style="left:2px;top:169px;width:1px;height:818px;background:#9c9a94;"></div>
<div style="left:3px;top:170px;width:952px;height:816px;background:#fff;"></div>
<div style="left:2px;top:986px;width:954px;height:1px;background:#c8c6c0;"></div>
<div class="hc" style="left:3px;width:249px;border-left-color:#dcdad5;"><div class="t" style="left:2px;top:0px;letter-spacing:-0.100px;">Název</div></div>
<div class="hc" style="left:252px;width:50px;"><div class="t" style="left:2px;top:0px;letter-spacing:-0.091px;">Přípona</div></div>
<div class="hc" style="left:302px;width:70px;"><div class="t" style="left:3px;top:0px;letter-spacing:-0.086px;">Velikost</div></div>
<div class="hc" style="left:372px;width:140px;"><div class="t" style="left:18px;top:0px;letter-spacing:-0.122px;">Datum</div><svg style="left:0px;top:-1px;" width="17" height="18" viewBox="0 0 17 18"><circle cx="1.9" cy="3" r="1.55" fill="#f4f8fc" stroke="#3d76c2" stroke-width="1.1"/><circle cx="1.9" cy="8.9" r="1.55" fill="#f4f8fc" stroke="#3d76c2" stroke-width="1.1"/><circle cx="1.9" cy="15" r="1.55" fill="#f4f8fc" stroke="#3d76c2" stroke-width="1.1"/><path d="M10.45,1.2 L14.9,6 L14.4,6.7 L12.1,5.6 V16.9 H8.8 V5.6 L6.5,6.7 L6,6 Z" fill="#fff" stroke="#7c7a76" stroke-width="0.7" stroke-linejoin="round"/><path d="M8.8,6.4 V16.6 M12.1,6.4 V16.6" stroke="#4a4a4a" stroke-width="0.7"/></svg></div>
<div class="hc" style="left:512px;width:101px;"><div class="t" style="left:3px;top:0px;">Atr.</div></div>
<div class="row" style="left:3px;top:188px;width:610px;">
<svg style="left:1px;top:1px;" width="16" height="16" viewBox="0 0 16 16"><path d="M0.6,7.6 L7.5,0.7 L14.4,7.6 L12.6,9.4 L7.5,4.3 L2.4,9.4 Z" fill="#fff" stroke="#777" stroke-width="1" stroke-linejoin="round"/><circle cx="7.5" cy="9.7" r="1.15" fill="#fff" stroke="#777" stroke-width="0.9"/><circle cx="7.5" cy="13.7" r="1.15" fill="#fff" stroke="#777" stroke-width="0.9"/></svg>
<div class="b" style="left:20px;letter-spacing:0.067px;">[..]</div>
<div class="b" style="left:311.5px;letter-spacing:0.150px;">&lt;DIR&gt;</div>
<div class="b" style="left:376px;letter-spacing:-0.220px;">06.24.19 22:1...</div>
<div class="b" style="left:513px;letter-spacing:0.144px;">drwxr-xr-x</div>
</div>
<div class="row" style="left:3px;top:206px;width:610px;">
<svg style="left:1px;top:2px;" width="16" height="15" viewBox="0 0 16 15"><path d="M0.6,1.7 Q0.6,0.6 1.7,0.6 H6.3 Q7.1,0.6 7.5,1.3 L8.1,2.5 H14.3 Q15.4,2.5 15.4,3.6 V13.3 Q15.4,14.4 14.3,14.4 H1.7 Q0.6,14.4 0.6,13.3 Z" fill="#a58c68" stroke="#9c845f" stroke-width="1"/><path d="M1.1,4.6 H5.4 Q6,4.6 6.5,4.1 L7.2,3.4 Q7.6,3 8.2,3 H14.9 V13.2 Q14.9,13.9 14.2,13.9 H1.8 Q1.1,13.9 1.1,13.2 Z" fill="#e1d0b5" stroke="#efe6d6" stroke-width="0.7"/><path d="M0.6,4.4 H5.3 Q5.9,4.4 6.3,4 L7.1,3.2 Q7.5,2.8 8.1,2.8 H15.2" fill="none" stroke="#9c845f" stroke-width="0.9"/></svg>
<div class="b" style="left:20px;letter-spacing:-0.071px;">[camera]</div>
<div class="b" style="left:311.5px;letter-spacing:0.150px;">&lt;DIR&gt;</div>
<div class="b" style="left:375px;letter-spacing:-0.153px;">10.23.18 12:0...</div>
<div class="b" style="left:513px;letter-spacing:0.144px;">drwxr-xr-x</div>
</div>
<div class="row" style="left:3px;top:224px;width:610px;">
<svg style="left:1px;top:2px;" width="16" height="15" viewBox="0 0 16 15"><path d="M0.6,1.7 Q0.6,0.6 1.7,0.6 H6.3 Q7.1,0.6 7.5,1.3 L8.1,2.5 H14.3 Q15.4,2.5 15.4,3.6 V13.3 Q15.4,14.4 14.3,14.4 H1.7 Q0.6,14.4 0.6,13.3 Z" fill="#a58c68" stroke="#9c845f" stroke-width="1"/><path d="M1.1,4.6 H5.4 Q6,4.6 6.5,4.1 L7.2,3.4 Q7.6,3 8.2,3 H14.9 V13.2 Q14.9,13.9 14.2,13.9 H1.8 Q1.1,13.9 1.1,13.2 Z" fill="#e1d0b5" stroke="#efe6d6" stroke-width="0.7"/><path d="M0.6,4.4 H5.3 Q5.9,4.4 6.3,4 L7.1,3.2 Q7.5,2.8 8.1,2.8 H15.2" fill="none" stroke="#9c845f" stroke-width="0.9"/><rect x="6.3" y="7.4" width="3.4" height="4" rx="0.8" stroke="#8d7550" fill="none" stroke-width="1.1"/><path d="M3.2,7.2 v-1.3 h1.3 M12.8,7.2 v-1.3 h-1.3 M3.2,11.2 v1.3 h1.3 M12.8,11.2 v1.3 h-1.3" stroke="#8d7550" stroke-width="1.1" fill="none"/></svg>
<div class="b" style="left:20px;letter-spacing:-0.225px;">[Desktop]</div>
<div class="b" style="left:311.5px;letter-spacing:0.150px;">&lt;DIR&gt;</div>
<div class="b" style="left:376px;letter-spacing:-0.220px;">06.25.19 17:3...</div>
<div class="b" style="left:513px;letter-spacing:0.144px;">drwxr-xr-x</div>
</div>
<div class="row" style="left:3px;top:242px;width:610px;">
<svg style="left:1px;top:2px;" width="16" height="15" viewBox="0 0 16 15"><path d="M0.6,1.7 Q0.6,0.6 1.7,0.6 H6.3 Q7.1,0.6 7.5,1.3 L8.1,2.5 H14.3 Q15.4,2.5 15.4,3.6 V13.3 Q15.4,14.4 14.3,14.4 H1.7 Q0.6,14.4 0.6,13.3 Z" fill="#a58c68" stroke="#9c845f" stroke-width="1"/><path d="M1.1,4.6 H5.4 Q6,4.6 6.5,4.1 L7.2,3.4 Q7.6,3 8.2,3 H14.9 V13.2 Q14.9,13.9 14.2,13.9 H1.8 Q1.1,13.9 1.1,13.2 Z" fill="#e1d0b5" stroke="#efe6d6" stroke-width="0.7"/><path d="M0.6,4.4 H5.3 Q5.9,4.4 6.3,4 L7.1,3.2 Q7.5,2.8 8.1,2.8 H15.2" fill="none" stroke="#9c845f" stroke-width="0.9"/><path d="M7,4.6 H10.4 Q12.6,4.6 12.6,7 V11.4" stroke="#8d7550" fill="none" stroke-width="0.9"/><path d="M5.6,6.4 H8.8 L11,8.6 V12.6 H5.6 Z" fill="#efe6d6" stroke="#8d7550" stroke-width="1"/><path d="M8.4,6.8 V9 H10.6" stroke="#8d7550" fill="none" stroke-width="0.8"/></svg>
<div class="b" style="left:20px;letter-spacing:-0.150px;">[Documents]</div>
<div class="b" style="left:311.5px;letter-spacing:0.150px;">&lt;DIR&gt;</div>
<div class="b" style="left:376px;letter-spacing:-0.220px;">06.11.19 15:3...</div>
<div class="b" style="left:513px;letter-spacing:0.144px;">drwxr-xr-x</div>
</div>
<div class="row" style="left:3px;top:260px;width:610px;">
<svg style="left:1px;top:2px;" width="16" height="15" viewBox="0 0 16 15"><path d="M0.6,1.7 Q0.6,0.6 1.7,0.6 H6.3 Q7.1,0.6 7.5,1.3 L8.1,2.5 H14.3 Q15.4,2.5 15.4,3.6 V13.3 Q15.4,14.4 14.3,14.4 H1.7 Q0.6,14.4 0.6,13.3 Z" fill="#a58c68" stroke="#9c845f" stroke-width="1"/><path d="M1.1,4.6 H5.4 Q6,4.6 6.5,4.1 L7.2,3.4 Q7.6,3 8.2,3 H14.9 V13.2 Q14.9,13.9 14.2,13.9 H1.8 Q1.1,13.9 1.1,13.2 Z" fill="#e1d0b5" stroke="#efe6d6" stroke-width="0.7"/><path d="M0.6,4.4 H5.3 Q5.9,4.4 6.3,4 L7.1,3.2 Q7.5,2.8 8.1,2.8 H15.2" fill="none" stroke="#9c845f" stroke-width="0.9"/><path d="M4.8,9 L8,12 L11.2,9" stroke="#7a4a1c" stroke-width="1.3" fill="none"/><path d="M8,5.4 v1 M8,7.4 v1 M8,9.4 v2" stroke="#7a4a1c" stroke-width="1.1"/></svg>
<div class="b" style="left:20px;letter-spacing:-0.370px;">[Downloads]</div>
<div class="b" style="left:311.5px;letter-spacing:0.150px;">&lt;DIR&gt;</div>
<div class="b" style="left:376px;letter-spacing:-0.220px;">06.12.19 22:4...</div>
<div class="b" style="left:513px;letter-spacing:0.144px;">drwxr-xr-x</div>
</div>
<div class="row" style="left:3px;top:278px;width:610px;">
<svg style="left:1px;top:2px;" width="16" height="15" viewBox="0 0 16 15"><path d="M0.6,1.7 Q0.6,0.6 1.7,0.6 H6.3 Q7.1,0.6 7.5,1.3 L8.1,2.5 H14.3 Q15.4,2.5 15.4,3.6 V13.3 Q15.4,14.4 14.3,14.4 H1.7 Q0.6,14.4 0.6,13.3 Z" fill="#a58c68" stroke="#9c845f" stroke-width="1"/><path d="M1.1,4.6 H5.4 Q6,4.6 6.5,4.1 L7.2,3.4 Q7.6,3 8.2,3 H14.9 V13.2 Q14.9,13.9 14.2,13.9 H1.8 Q1.1,13.9 1.1,13.2 Z" fill="#e1d0b5" stroke="#efe6d6" stroke-width="0.7"/><path d="M0.6,4.4 H5.3 Q5.9,4.4 6.3,4 L7.1,3.2 Q7.5,2.8 8.1,2.8 H15.2" fill="none" stroke="#9c845f" stroke-width="0.9"/></svg>
<div class="b" style="left:20px;letter-spacing:-0.312px;">[h264ify]</div>
<div class="b" style="left:311.5px;letter-spacing:0.150px;">&lt;DIR&gt;</div>
<div class="b" style="left:375px;letter-spacing:-0.153px;">10.23.18 12:0...</div>
<div class="b" style="left:513px;letter-spacing:0.144px;">drwxr-xr-x</div>
</div>
<div class="row" style="left:3px;top:296px;width:610px;">
<svg style="left:1px;top:2px;" width="16" height="15" viewBox="0 0 16 15"><path d="M0.6,1.7 Q0.6,0.6 1.7,0.6 H6.3 Q7.1,0.6 7.5,1.3 L8.1,2.5 H14.3 Q15.4,2.5 15.4,3.6 V13.3 Q15.4,14.4 14.3,14.4 H1.7 Q0.6,14.4 0.6,13.3 Z" fill="#a58c68" stroke="#9c845f" stroke-width="1"/><path d="M1.1,4.6 H5.4 Q6,4.6 6.5,4.1 L7.2,3.4 Q7.6,3 8.2,3 H14.9 V13.2 Q14.9,13.9 14.2,13.9 H1.8 Q1.1,13.9 1.1,13.2 Z" fill="#e1d0b5" stroke="#efe6d6" stroke-width="0.7"/><path d="M0.6,4.4 H5.3 Q5.9,4.4 6.3,4 L7.1,3.2 Q7.5,2.8 8.1,2.8 H15.2" fill="none" stroke="#9c845f" stroke-width="0.9"/><path d="M6,10 V5.6 H11.6 V10" stroke="#8d7550" fill="none" stroke-width="1.1"/><circle cx="4.9" cy="10.4" r="1.5" fill="#efe6d6" stroke="#8d7550" stroke-width="1"/><circle cx="10.5" cy="10.4" r="1.5" fill="#efe6d6" stroke="#8d7550" stroke-width="1"/></svg>
<div class="b" style="left:20px;letter-spacing:-0.467px;">[Music]</div>
<div class="b" style="left:311.5px;letter-spacing:0.150px;">&lt;DIR&gt;</div>
<div class="b" style="left:375px;letter-spacing:-0.153px;">11.03.16 19:1...</div>
<div class="b" style="left:513px;letter-spacing:0.144px;">drwxr-xr-x</div>
</div>
<div class="row" style="left:3px;top:314px;width:610px;">
<svg style="left:1px;top:2px;" width="16" height="15" viewBox="0 0 16 15"><path d="M0.6,1.7 Q0.6,0.6 1.7,0.6 H6.3 Q7.1,0.6 7.5,1.3 L8.1,2.5 H14.3 Q15.4,2.5 15.4,3.6 V13.3 Q15.4,14.4 14.3,14.4 H1.7 Q0.6,14.4 0.6,13.3 Z" fill="#a58c68" stroke="#9c845f" stroke-width="1"/><path d="M1.1,4.6 H5.4 Q6,4.6 6.5,4.1 L7.2,3.4 Q7.6,3 8.2,3 H14.9 V13.2 Q14.9,13.9 14.2,13.9 H1.8 Q1.1,13.9 1.1,13.2 Z" fill="#e1d0b5" stroke="#efe6d6" stroke-width="0.7"/><path d="M0.6,4.4 H5.3 Q5.9,4.4 6.3,4 L7.1,3.2 Q7.5,2.8 8.1,2.8 H15.2" fill="none" stroke="#9c845f" stroke-width="0.9"/><path d="M3.4,12 V7.4 Q3.4,6.6 4.2,6.6 H5.8 L6.6,5.6 H9.6 L10.4,6.6 H12 Q12.8,6.6 12.8,7.4 V12 H11.4 M3.4,12 H4.8" stroke="#8d7550" fill="none" stroke-width="1"/><circle cx="8.1" cy="9.8" r="2.4" fill="#efe6d6" stroke="#8d7550" stroke-width="0.9"/><circle cx="8.1" cy="9.8" r="0.9" fill="#b8aa80"/></svg>
<div class="b" style="left:20px;letter-spacing:-0.311px;">[Pictures]</div>
<div class="b" style="left:311.5px;letter-spacing:0.150px;">&lt;DIR&gt;</div>
<div class="b" style="left:376px;letter-spacing:-0.220px;">06.25.19 18:3...</div>
<div class="b" style="left:513px;letter-spacing:0.144px;">drwxr-xr-x</div>
</div>
<div class="row" style="left:3px;top:332px;width:610px;">
<svg style="left:1px;top:2px;" width="16" height="15" viewBox="0 0 16 15"><path d="M0.6,1.7 Q0.6,0.6 1.7,0.6 H6.3 Q7.1,0.6 7.5,1.3 L8.1,2.5 H14.3 Q15.4,2.5 15.4,3.6 V13.3 Q15.4,14.4 14.3,14.4 H1.7 Q0.6,14.4 0.6,13.3 Z" fill="#a58c68" stroke="#9c845f" stroke-width="1"/><path d="M1.1,4.6 H5.4 Q6,4.6 6.5,4.1 L7.2,3.4 Q7.6,3 8.2,3 H14.9 V13.2 Q14.9,13.9 14.2,13.9 H1.8 Q1.1,13.9 1.1,13.2 Z" fill="#e1d0b5" stroke="#efe6d6" stroke-width="0.7"/><path d="M0.6,4.4 H5.3 Q5.9,4.4 6.3,4 L7.1,3.2 Q7.5,2.8 8.1,2.8 H15.2" fill="none" stroke="#9c845f" stroke-width="0.9"/><circle cx="8" cy="11.6" r="1.6" fill="#efe6d6" stroke="#8d7550" stroke-width="1"/><path d="M6.6,10.4 L4,7.4 M9.4,10.4 L12,7.4" stroke="#8d7550" fill="none" stroke-width="0.9" stroke-dasharray="1.2 0.8"/><path d="M2.8,6.2 H5.4 L2.8,8.8 Z M13.2,6.2 H10.6 L13.2,8.8 Z" fill="#8d7550"/></svg>
<div class="b" style="left:20px;letter-spacing:-0.529px;">[Public]</div>
<div class="b" style="left:311.5px;letter-spacing:0.150px;">&lt;DIR&gt;</div>
<div class="b" style="left:375px;letter-spacing:-0.153px;">11.03.16 19:1...</div>
<div class="b" style="left:513px;letter-spacing:0.144px;">drwxr-xr-x</div>
</div>
<div class="row" style="left:3px;top:350px;width:610px;">
<svg style="left:1px;top:2px;" width="16" height="15" viewBox="0 0 16 15"><path d="M0.6,1.7 Q0.6,0.6 1.7,0.6 H6.3 Q7.1,0.6 7.5,1.3 L8.1,2.5 H14.3 Q15.4,2.5 15.4,3.6 V13.3 Q15.4,14.4 14.3,14.4 H1.7 Q0.6,14.4 0.6,13.3 Z" fill="#a58c68" stroke="#9c845f" stroke-width="1"/><path d="M1.1,4.6 H5.4 Q6,4.6 6.5,4.1 L7.2,3.4 Q7.6,3 8.2,3 H14.9 V13.2 Q14.9,13.9 14.2,13.9 H1.8 Q1.1,13.9 1.1,13.2 Z" fill="#e1d0b5" stroke="#efe6d6" stroke-width="0.7"/><path d="M0.6,4.4 H5.3 Q5.9,4.4 6.3,4 L7.1,3.2 Q7.5,2.8 8.1,2.8 H15.2" fill="none" stroke="#9c845f" stroke-width="0.9"/></svg>
<div class="b" style="left:20px;letter-spacing:-0.062px;">[Scratch]</div>
<div class="b" style="left:311.5px;letter-spacing:0.150px;">&lt;DIR&gt;</div>
<div class="b" style="left:376px;letter-spacing:-0.220px;">06.04.19 13:1...</div>
<div class="b" style="left:513px;letter-spacing:0.144px;">drwxr-xr-x</div>
</div>
<div class="row" style="left:3px;top:368px;width:610px;">
<svg style="left:1px;top:2px;" width="16" height="15" viewBox="0 0 16 15"><path d="M0.6,1.7 Q0.6,0.6 1.7,0.6 H6.3 Q7.1,0.6 7.5,1.3 L8.1,2.5 H14.3 Q15.4,2.5 15.4,3.6 V13.3 Q15.4,14.4 14.3,14.4 H1.7 Q0.6,14.4 0.6,13.3 Z" fill="#a58c68" stroke="#9c845f" stroke-width="1"/><path d="M1.1,4.6 H5.4 Q6,4.6 6.5,4.1 L7.2,3.4 Q7.6,3 8.2,3 H14.9 V13.2 Q14.9,13.9 14.2,13.9 H1.8 Q1.1,13.9 1.1,13.2 Z" fill="#e1d0b5" stroke="#efe6d6" stroke-width="0.7"/><path d="M0.6,4.4 H5.3 Q5.9,4.4 6.3,4 L7.1,3.2 Q7.5,2.8 8.1,2.8 H15.2" fill="none" stroke="#9c845f" stroke-width="0.9"/><path d="M6,4.8 H9.8 Q12,4.8 12,7 V12" stroke="#8d7550" fill="none" stroke-width="1"/><path d="M5,6.6 H8.4 L10.2,8.4 V12.6 H5 Z" fill="#f4eee2" stroke="#8d7550" stroke-width="1" stroke-dasharray="1 0.9"/></svg>
<div class="b" style="left:20px;letter-spacing:-0.250px;">[Templates]</div>
<div class="b" style="left:311.5px;letter-spacing:0.150px;">&lt;DIR&gt;</div>
<div class="b" style="left:375px;letter-spacing:-0.153px;">11.03.16 19:1...</div>
<div class="b" style="left:513px;letter-spacing:0.144px;">drwxr-xr-x</div>
</div>
<div class="row" style="left:3px;top:386px;width:610px;">
<svg style="left:1px;top:2px;" width="16" height="15" viewBox="0 0 16 15"><path d="M0.6,1.7 Q0.6,0.6 1.7,0.6 H6.3 Q7.1,0.6 7.5,1.3 L8.1,2.5 H14.3 Q15.4,2.5 15.4,3.6 V13.3 Q15.4,14.4 14.3,14.4 H1.7 Q0.6,14.4 0.6,13.3 Z" fill="#a58c68" stroke="#9c845f" stroke-width="1"/><path d="M1.1,4.6 H5.4 Q6,4.6 6.5,4.1 L7.2,3.4 Q7.6,3 8.2,3 H14.9 V13.2 Q14.9,13.9 14.2,13.9 H1.8 Q1.1,13.9 1.1,13.2 Z" fill="#e1d0b5" stroke="#efe6d6" stroke-width="0.7"/><path d="M0.6,4.4 H5.3 Q5.9,4.4 6.3,4 L7.1,3.2 Q7.5,2.8 8.1,2.8 H15.2" fill="none" stroke="#9c845f" stroke-width="0.9"/><rect x="6.8" y="6.2" width="5.6" height="4.8" fill="#a8946f" stroke="#8d7550" stroke-width="0.9"/><path d="M4,6.6 L6.4,8.6 L4,10.6 Z" fill="#8d7550"/><path d="M3.8,12.2 H12.4" stroke="#efe6d6" stroke-width="0.9"/></svg>
<div class="b" style="left:20px;letter-spacing:-0.214px;">[Videos]</div>
<div class="b" style="left:311.5px;letter-spacing:0.150px;">&lt;DIR&gt;</div>
<div class="b" style="left:375px;letter-spacing:-0.153px;">11.03.16 19:1...</div>
<div class="b" style="left:513px;letter-spacing:0.144px;">drwxr-xr-x</div>
</div>
<div class="row" style="left:3px;top:404px;width:610px;background:#4b6983;">
<svg style="left:2px;top:0px;" width="14" height="16" viewBox="0 0 14 16"><defs><linearGradient id="pk_12" x1="0" y1="0" x2="0" y2="1"><stop offset="0" stop-color="#f9cf84"/><stop offset="1" stop-color="#e39a2b"/></linearGradient></defs><rect x="0.6" y="2.6" width="13" height="12.6" rx="1.2" fill="url(#pk_12)" stroke="#b4650d" stroke-width="1.1"/><rect x="1.6" y="3.6" width="11" height="10.6" fill="none" stroke="#fbe3b4" stroke-width="0.8"/><rect x="1.8" y="3.6" width="5.4" height="3.2" fill="#f4f4f4"/><path d="M1.8,7.4 H12.4" stroke="#d58a20" stroke-width="0.8"/><path d="M7.4,1.4 L12.8,2.2 L12.4,6.2 L7.2,5.6 Z" fill="#fbfbfb" stroke="#b4650d" stroke-width="0.9"/><rect x="9.4" y="3.2" width="2.2" height="1.6" fill="#e9a94a"/></svg>
<div class="b w" style="left:20px;letter-spacing:-0.062px;">wsjtx_2.0.1_armhf</div>
<div class="b w" style="left:253px;letter-spacing:-0.650px;">deb</div>
<div class="b w" style="left:311.5px;letter-spacing:-0.300px;">10,0 M</div>
<div class="b w" style="left:376px;letter-spacing:-0.220px;">06.11.19 21:4...</div>
<div class="b w" style="left:513px;letter-spacing:-0.222px;">-rw-r--r--</div>
</div>
<div class="t" style="left:2px;top:987px;letter-spacing:-0.174px;">Vybráno: 0 z 10,0 M, souborů: 0 z 1, složek: 0 z 11</div>
<div style="left:963px;top:169px;width:954px;height:1px;background:#9c9a94;"></div>
<div style="left:963px;top:169px;width:1px;height:818px;background:#9c9a94;"></div>
<div style="left:964px;top:170px;width:953px;height:816px;background:#fff;"></div>
<div style="left:963px;top:986px;width:954px;height:1px;background:#c8c6c0;"></div>
<div class="hc" style="left:964px;width:249px;border-left-color:#dcdad5;"><div class="t" style="left:2px;top:0px;letter-spacing:-0.100px;">Název</div></div>
<div class="hc" style="left:1213px;width:50px;"><div class="t" style="left:2px;top:0px;letter-spacing:-0.091px;">Přípona</div></div>
<div class="hc" style="left:1263px;width:70px;"><div class="t" style="left:3px;top:0px;letter-spacing:-0.086px;">Velikost</div></div>
<div class="hc" style="left:1333px;width:140px;"><div class="t" style="left:2px;top:0px;letter-spacing:-0.122px;">Datum</div></div>
<div class="hc" style="left:1473px;width:101px;"><div class="t" style="left:3px;top:0px;">Atr.</div></div>
<div class="row" style="left:964px;top:188px;width:610px;">
<svg style="left:1px;top:1px;" width="16" height="16" viewBox="0 0 16 16"><path d="M0.6,7.6 L7.5,0.7 L14.4,7.6 L12.6,9.4 L7.5,4.3 L2.4,9.4 Z" fill="#fff" stroke="#777" stroke-width="1" stroke-linejoin="round"/><circle cx="7.5" cy="9.7" r="1.15" fill="#fff" stroke="#777" stroke-width="0.9"/><circle cx="7.5" cy="13.7" r="1.15" fill="#fff" stroke="#777" stroke-width="0.9"/></svg>
<div class="b" style="left:20px;letter-spacing:0.067px;">[..]</div>
<div class="b" style="left:311.5px;letter-spacing:0.150px;">&lt;DIR&gt;</div>
<div class="b" style="left:376px;letter-spacing:-0.220px;">06.24.19 22:1...</div>
<div class="b" style="left:513px;letter-spacing:0.144px;">drwxr-xr-x</div>
</div>
<div class="row" style="left:964px;top:206px;width:610px;">
<svg style="left:1px;top:2px;" width="16" height="15" viewBox="0 0 16 15"><path d="M0.6,1.7 Q0.6,0.6 1.7,0.6 H6.3 Q7.1,0.6 7.5,1.3 L8.1,2.5 H14.3 Q15.4,2.5 15.4,3.6 V13.3 Q15.4,14.4 14.3,14.4 H1.7 Q0.6,14.4 0.6,13.3 Z" fill="#a58c68" stroke="#9c845f" stroke-width="1"/><path d="M1.1,4.6 H5.4 Q6,4.6 6.5,4.1 L7.2,3.4 Q7.6,3 8.2,3 H14.9 V13.2 Q14.9,13.9 14.2,13.9 H1.8 Q1.1,13.9 1.1,13.2 Z" fill="#e1d0b5" stroke="#efe6d6" stroke-width="0.7"/><path d="M0.6,4.4 H5.3 Q5.9,4.4 6.3,4 L7.1,3.2 Q7.5,2.8 8.1,2.8 H15.2" fill="none" stroke="#9c845f" stroke-width="0.9"/></svg>
<div class="b" style="left:20px;letter-spacing:-0.071px;">[camera]</div>
<div class="b" style="left:311.5px;letter-spacing:0.150px;">&lt;DIR&gt;</div>
<div class="b" style="left:375px;letter-spacing:-0.153px;">10.23.18 12:0...</div>
<div class="b" style="left:513px;letter-spacing:0.144px;">drwxr-xr-x</div>
</div>
<div class="row" style="left:964px;top:224px;width:610px;">
<svg style="left:1px;top:2px;" width="16" height="15" viewBox="0 0 16 15"><path d="M0.6,1.7 Q0.6,0.6 1.7,0.6 H6.3 Q7.1,0.6 7.5,1.3 L8.1,2.5 H14.3 Q15.4,2.5 15.4,3.6 V13.3 Q15.4,14.4 14.3,14.4 H1.7 Q0.6,14.4 0.6,13.3 Z" fill="#a58c68" stroke="#9c845f" stroke-width="1"/><path d="M1.1,4.6 H5.4 Q6,4.6 6.5,4.1 L7.2,3.4 Q7.6,3 8.2,3 H14.9 V13.2 Q14.9,13.9 14.2,13.9 H1.8 Q1.1,13.9 1.1,13.2 Z" fill="#e1d0b5" stroke="#efe6d6" stroke-width="0.7"/><path d="M0.6,4.4 H5.3 Q5.9,4.4 6.3,4 L7.1,3.2 Q7.5,2.8 8.1,2.8 H15.2" fill="none" stroke="#9c845f" stroke-width="0.9"/><rect x="6.3" y="7.4" width="3.4" height="4" rx="0.8" stroke="#8d7550" fill="none" stroke-width="1.1"/><path d="M3.2,7.2 v-1.3 h1.3 M12.8,7.2 v-1.3 h-1.3 M3.2,11.2 v1.3 h1.3 M12.8,11.2 v1.3 h-1.3" stroke="#8d7550" stroke-width="1.1" fill="none"/></svg>
<div class="b" style="left:20px;letter-spacing:-0.225px;">[Desktop]</div>
<div class="b" style="left:311.5px;letter-spacing:0.150px;">&lt;DIR&gt;</div>
<div class="b" style="left:376px;letter-spacing:-0.220px;">06.25.19 17:3...</div>
<div class="b" style="left:513px;letter-spacing:0.144px;">drwxr-xr-x</div>
</div>
<div class="row" style="left:964px;top:242px;width:610px;">
<svg style="left:1px;top:2px;" width="16" height="15" viewBox="0 0 16 15"><path d="M0.6,1.7 Q0.6,0.6 1.7,0.6 H6.3 Q7.1,0.6 7.5,1.3 L8.1,2.5 H14.3 Q15.4,2.5 15.4,3.6 V13.3 Q15.4,14.4 14.3,14.4 H1.7 Q0.6,14.4 0.6,13.3 Z" fill="#a58c68" stroke="#9c845f" stroke-width="1"/><path d="M1.1,4.6 H5.4 Q6,4.6 6.5,4.1 L7.2,3.4 Q7.6,3 8.2,3 H14.9 V13.2 Q14.9,13.9 14.2,13.9 H1.8 Q1.1,13.9 1.1,13.2 Z" fill="#e1d0b5" stroke="#efe6d6" stroke-width="0.7"/><path d="M0.6,4.4 H5.3 Q5.9,4.4 6.3,4 L7.1,3.2 Q7.5,2.8 8.1,2.8 H15.2" fill="none" stroke="#9c845f" stroke-width="0.9"/><path d="M7,4.6 H10.4 Q12.6,4.6 12.6,7 V11.4" stroke="#8d7550" fill="none" stroke-width="0.9"/><path d="M5.6,6.4 H8.8 L11,8.6 V12.6 H5.6 Z" fill="#efe6d6" stroke="#8d7550" stroke-width="1"/><path d="M8.4,6.8 V9 H10.6" stroke="#8d7550" fill="none" stroke-width="0.8"/></svg>
<div class="b" style="left:20px;letter-spacing:-0.150px;">[Documents]</div>
<div class="b" style="left:311.5px;letter-spacing:0.150px;">&lt;DIR&gt;</div>
<div class="b" style="left:376px;letter-spacing:-0.220px;">06.11.19 15:3...</div>
<div class="b" style="left:513px;letter-spacing:0.144px;">drwxr-xr-x</div>
</div>
<div class="row" style="left:964px;top:260px;width:610px;">
<svg style="left:1px;top:2px;" width="16" height="15" viewBox="0 0 16 15"><path d="M0.6,1.7 Q0.6,0.6 1.7,0.6 H6.3 Q7.1,0.6 7.5,1.3 L8.1,2.5 H14.3 Q15.4,2.5 15.4,3.6 V13.3 Q15.4,14.4 14.3,14.4 H1.7 Q0.6,14.4 0.6,13.3 Z" fill="#a58c68" stroke="#9c845f" stroke-width="1"/><path d="M1.1,4.6 H5.4 Q6,4.6 6.5,4.1 L7.2,3.4 Q7.6,3 8.2,3 H14.9 V13.2 Q14.9,13.9 14.2,13.9 H1.8 Q1.1,13.9 1.1,13.2 Z" fill="#e1d0b5" stroke="#efe6d6" stroke-width="0.7"/><path d="M0.6,4.4 H5.3 Q5.9,4.4 6.3,4 L7.1,3.2 Q7.5,2.8 8.1,2.8 H15.2" fill="none" stroke="#9c845f" stroke-width="0.9"/><path d="M4.8,9 L8,12 L11.2,9" stroke="#7a4a1c" stroke-width="1.3" fill="none"/><path d="M8,5.4 v1 M8,7.4 v1 M8,9.4 v2" stroke="#7a4a1c" stroke-width="1.1"/></svg>
<div class="b" style="left:20px;letter-spacing:-0.370px;">[Downloads]</div>
<div class="b" style="left:311.5px;letter-spacing:0.150px;">&lt;DIR&gt;</div>
<div class="b" style="left:376px;letter-spacing:-0.220px;">06.12.19 22:4...</div>
<div class="b" style="left:513px;letter-spacing:0.144px;">drwxr-xr-x</div>
</div>
<div class="row" style="left:964px;top:278px;width:610px;">
<svg style="left:1px;top:2px;" width="16" height="15" viewBox="0 0 16 15"><path d="M0.6,1.7 Q0.6,0.6 1.7,0.6 H6.3 Q7.1,0.6 7.5,1.3 L8.1,2.5 H14.3 Q15.4,2.5 15.4,3.6 V13.3 Q15.4,14.4 14.3,14.4 H1.7 Q0.6,14.4 0.6,13.3 Z" fill="#a58c68" stroke="#9c845f" stroke-width="1"/><path d="M1.1,4.6 H5.4 Q6,4.6 6.5,4.1 L7.2,3.4 Q7.6,3 8.2,3 H14.9 V13.2 Q14.9,13.9 14.2,13.9 H1.8 Q1.1,13.9 1.1,13.2 Z" fill="#e1d0b5" stroke="#efe6d6" stroke-width="0.7"/><path d="M0.6,4.4 H5.3 Q5.9,4.4 6.3,4 L7.1,3.2 Q7.5,2.8 8.1,2.8 H15.2" fill="none" stroke="#9c845f" stroke-width="0.9"/></svg>
<div class="b" style="left:20px;letter-spacing:-0.312px;">[h264ify]</div>
<div class="b" style="left:311.5px;letter-spacing:0.150px;">&lt;DIR&gt;</div>
<div class="b" style="left:375px;letter-spacing:-0.153px;">10.23.18 12:0...</div>
<div class="b" style="left:513px;letter-spacing:0.144px;">drwxr-xr-x</div>
</div>
<div class="row" style="left:964px;top:296px;width:610px;">
<svg style="left:1px;top:2px;" width="16" height="15" viewBox="0 0 16 15"><path d="M0.6,1.7 Q0.6,0.6 1.7,0.6 H6.3 Q7.1,0.6 7.5,1.3 L8.1,2.5 H14.3 Q15.4,2.5 15.4,3.6 V13.3 Q15.4,14.4 14.3,14.4 H1.7 Q0.6,14.4 0.6,13.3 Z" fill="#a58c68" stroke="#9c845f" stroke-width="1"/><path d="M1.1,4.6 H5.4 Q6,4.6 6.5,4.1 L7.2,3.4 Q7.6,3 8.2,3 H14.9 V13.2 Q14.9,13.9 14.2,13.9 H1.8 Q1.1,13.9 1.1,13.2 Z" fill="#e1d0b5" stroke="#efe6d6" stroke-width="0.7"/><path d="M0.6,4.4 H5.3 Q5.9,4.4 6.3,4 L7.1,3.2 Q7.5,2.8 8.1,2.8 H15.2" fill="none" stroke="#9c845f" stroke-width="0.9"/><path d="M6,10 V5.6 H11.6 V10" stroke="#8d7550" fill="none" stroke-width="1.1"/><circle cx="4.9" cy="10.4" r="1.5" fill="#efe6d6" stroke="#8d7550" stroke-width="1"/><circle cx="10.5" cy="10.4" r="1.5" fill="#efe6d6" stroke="#8d7550" stroke-width="1"/></svg>
<div class="b" style="left:20px;letter-spacing:-0.467px;">[Music]</div>
<div class="b" style="left:311.5px;letter-spacing:0.150px;">&lt;DIR&gt;</div>
<div class="b" style="left:375px;letter-spacing:-0.153px;">11.03.16 19:1...</div>
<div class="b" style="left:513px;letter-spacing:0.144px;">drwxr-xr-x</div>
</div>
<div class="row" style="left:964px;top:314px;width:610px;">
<svg style="left:1px;top:2px;" width="16" height="15" viewBox="0 0 16 15"><path d="M0.6,1.7 Q0.6,0.6 1.7,0.6 H6.3 Q7.1,0.6 7.5,1.3 L8.1,2.5 H14.3 Q15.4,2.5 15.4,3.6 V13.3 Q15.4,14.4 14.3,14.4 H1.7 Q0.6,14.4 0.6,13.3 Z" fill="#a58c68" stroke="#9c845f" stroke-width="1"/><path d="M1.1,4.6 H5.4 Q6,4.6 6.5,4.1 L7.2,3.4 Q7.6,3 8.2,3 H14.9 V13.2 Q14.9,13.9 14.2,13.9 H1.8 Q1.1,13.9 1.1,13.2 Z" fill="#e1d0b5" stroke="#efe6d6" stroke-width="0.7"/><path d="M0.6,4.4 H5.3 Q5.9,4.4 6.3,4 L7.1,3.2 Q7.5,2.8 8.1,2.8 H15.2" fill="none" stroke="#9c845f" stroke-width="0.9"/><path d="M3.4,12 V7.4 Q3.4,6.6 4.2,6.6 H5.8 L6.6,5.6 H9.6 L10.4,6.6 H12 Q12.8,6.6 12.8,7.4 V12 H11.4 M3.4,12 H4.8" stroke="#8d7550" fill="none" stroke-width="1"/><circle cx="8.1" cy="9.8" r="2.4" fill="#efe6d6" stroke="#8d7550" stroke-width="0.9"/><circle cx="8.1" cy="9.8" r="0.9" fill="#b8aa80"/></svg>
<div class="b" style="left:20px;letter-spacing:-0.311px;">[Pictures]</div>
<div class="b" style="left:311.5px;letter-spacing:0.150px;">&lt;DIR&gt;</div>
<div class="b" style="left:376px;letter-spacing:-0.220px;">06.25.19 18:3...</div>
<div class="b" style="left:513px;letter-spacing:0.144px;">drwxr-xr-x</div>
</div>
<div class="row" style="left:964px;top:332px;width:610px;">
<svg style="left:1px;top:2px;" width="16" height="15" viewBox="0 0 16 15"><path d="M0.6,1.7 Q0.6,0.6 1.7,0.6 H6.3 Q7.1,0.6 7.5,1.3 L8.1,2.5 H14.3 Q15.4,2.5 15.4,3.6 V13.3 Q15.4,14.4 14.3,14.4 H1.7 Q0.6,14.4 0.6,13.3 Z" fill="#a58c68" stroke="#9c845f" stroke-width="1"/><path d="M1.1,4.6 H5.4 Q6,4.6 6.5,4.1 L7.2,3.4 Q7.6,3 8.2,3 H14.9 V13.2 Q14.9,13.9 14.2,13.9 H1.8 Q1.1,13.9 1.1,13.2 Z" fill="#e1d0b5" stroke="#efe6d6" stroke-width="0.7"/><path d="M0.6,4.4 H5.3 Q5.9,4.4 6.3,4 L7.1,3.2 Q7.5,2.8 8.1,2.8 H15.2" fill="none" stroke="#9c845f" stroke-width="0.9"/><circle cx="8" cy="11.6" r="1.6" fill="#efe6d6" stroke="#8d7550" stroke-width="1"/><path d="M6.6,10.4 L4,7.4 M9.4,10.4 L12,7.4" stroke="#8d7550" fill="none" stroke-width="0.9" stroke-dasharray="1.2 0.8"/><path d="M2.8,6.2 H5.4 L2.8,8.8 Z M13.2,6.2 H10.6 L13.2,8.8 Z" fill="#8d7550"/></svg>
<div class="b" style="left:20px;letter-spacing:-0.529px;">[Public]</div>
<div class="b" style="left:311.5px;letter-spacing:0.150px;">&lt;DIR&gt;</div>
<div class="b" style="left:375px;letter-spacing:-0.153px;">11.03.16 19:1...</div>
<div class="b" style="left:513px;letter-spacing:0.144px;">drwxr-xr-x</div>
</div>
<div class="row" style="left:964px;top:350px;width:610px;">
<svg style="left:1px;top:2px;" width="16" height="15" viewBox="0 0 16 15"><path d="M0.6,1.7 Q0.6,0.6 1.7,0.6 H6.3 Q7.1,0.6 7.5,1.3 L8.1,2.5 H14.3 Q15.4,2.5 15.4,3.6 V13.3 Q15.4,14.4 14.3,14.4 H1.7 Q0.6,14.4 0.6,13.3 Z" fill="#a58c68" stroke="#9c845f" stroke-width="1"/><path d="M1.1,4.6 H5.4 Q6,4.6 6.5,4.1 L7.2,3.4 Q7.6,3 8.2,3 H14.9 V13.2 Q14.9,13.9 14.2,13.9 H1.8 Q1.1,13.9 1.1,13.2 Z" fill="#e1d0b5" stroke="#efe6d6" stroke-width="0.7"/><path d="M0.6,4.4 H5.3 Q5.9,4.4 6.3,4 L7.1,3.2 Q7.5,2.8 8.1,2.8 H15.2" fill="none" stroke="#9c845f" stroke-width="0.9"/></svg>
<div class="b" style="left:20px;letter-spacing:-0.062px;">[Scratch]</div>
<div class="b" style="left:311.5px;letter-spacing:0.150px;">&lt;DIR&gt;</div>
<div class="b" style="left:376px;letter-spacing:-0.220px;">06.04.19 13:1...</div>
<div class="b" style="left:513px;letter-spacing:0.144px;">drwxr-xr-x</div>
</div>
<div class="row" style="left:964px;top:368px;width:610px;">
<svg style="left:1px;top:2px;" width="16" height="15" viewBox="0 0 16 15"><path d="M0.6,1.7 Q0.6,0.6 1.7,0.6 H6.3 Q7.1,0.6 7.5,1.3 L8.1,2.5 H14.3 Q15.4,2.5 15.4,3.6 V13.3 Q15.4,14.4 14.3,14.4 H1.7 Q0.6,14.4 0.6,13.3 Z" fill="#a58c68" stroke="#9c845f" stroke-width="1"/><path d="M1.1,4.6 H5.4 Q6,4.6 6.5,4.1 L7.2,3.4 Q7.6,3 8.2,3 H14.9 V13.2 Q14.9,13.9 14.2,13.9 H1.8 Q1.1,13.9 1.1,13.2 Z" fill="#e1d0b5" stroke="#efe6d6" stroke-width="0.7"/><path d="M0.6,4.4 H5.3 Q5.9,4.4 6.3,4 L7.1,3.2 Q7.5,2.8 8.1,2.8 H15.2" fill="none" stroke="#9c845f" stroke-width="0.9"/><path d="M6,4.8 H9.8 Q12,4.8 12,7 V12" stroke="#8d7550" fill="none" stroke-width="1"/><path d="M5,6.6 H8.4 L10.2,8.4 V12.6 H5 Z" fill="#f4eee2" stroke="#8d7550" stroke-width="1" stroke-dasharray="1 0.9"/></svg>
<div class="b" style="left:20px;letter-spacing:-0.250px;">[Templates]</div>
<div class="b" style="left:311.5px;letter-spacing:0.150px;">&lt;DIR&gt;</div>
<div class="b" style="left:375px;letter-spacing:-0.153px;">11.03.16 19:1...</div>
<div class="b" style="left:513px;letter-spacing:0.144px;">drwxr-xr-x</div>
</div>
<div class="row" style="left:964px;top:386px;width:610px;">
<svg style="left:1px;top:2px;" width="16" height="15" viewBox="0 0 16 15"><path d="M0.6,1.7 Q0.6,0.6 1.7,0.6 H6.3 Q7.1,0.6 7.5,1.3 L8.1,2.5 H14.3 Q15.4,2.5 15.4,3.6 V13.3 Q15.4,14.4 14.3,14.4 H1.7 Q0.6,14.4 0.6,13.3 Z" fill="#a58c68" stroke="#9c845f" stroke-width="1"/><path d="M1.1,4.6 H5.4 Q6,4.6 6.5,4.1 L7.2,3.4 Q7.6,3 8.2,3 H14.9 V13.2 Q14.9,13.9 14.2,13.9 H1.8 Q1.1,13.9 1.1,13.2 Z" fill="#e1d0b5" stroke="#efe6d6" stroke-width="0.7"/><path d="M0.6,4.4 H5.3 Q5.9,4.4 6.3,4 L7.1,3.2 Q7.5,2.8 8.1,2.8 H15.2" fill="none" stroke="#9c845f" stroke-width="0.9"/><rect x="6.8" y="6.2" width="5.6" height="4.8" fill="#a8946f" stroke="#8d7550" stroke-width="0.9"/><path d="M4,6.6 L6.4,8.6 L4,10.6 Z" fill="#8d7550"/><path d="M3.8,12.2 H12.4" stroke="#efe6d6" stroke-width="0.9"/></svg>
<div class="b" style="left:20px;letter-spacing:-0.214px;">[Videos]</div>
<div class="b" style="left:311.5px;letter-spacing:0.150px;">&lt;DIR&gt;</div>
<div class="b" style="left:375px;letter-spacing:-0.153px;">11.03.16 19:1...</div>
<div class="b" style="left:513px;letter-spacing:0.144px;">drwxr-xr-x</div>
</div>
<div class="row" style="left:964px;top:404px;width:610px;">
<svg style="left:2px;top:0px;" width="14" height="16" viewBox="0 0 14 16"><defs><linearGradient id="pk_13" x1="0" y1="0" x2="0" y2="1"><stop offset="0" stop-color="#f9cf84"/><stop offset="1" stop-color="#e39a2b"/></linearGradient></defs><rect x="0.6" y="2.6" width="13" height="12.6" rx="1.2" fill="url(#pk_13)" stroke="#b4650d" stroke-width="1.1"/><rect x="1.6" y="3.6" width="11" height="10.6" fill="none" stroke="#fbe3b4" stroke-width="0.8"/><rect x="1.8" y="3.6" width="5.4" height="3.2" fill="#f4f4f4"/><path d="M1.8,7.4 H12.4" stroke="#d58a20" stroke-width="0.8"/><path d="M7.4,1.4 L12.8,2.2 L12.4,6.2 L7.2,5.6 Z" fill="#fbfbfb" stroke="#b4650d" stroke-width="0.9"/><rect x="9.4" y="3.2" width="2.2" height="1.6" fill="#e9a94a"/></svg>
<div class="b" style="left:20px;letter-spacing:-0.062px;">wsjtx_2.0.1_armhf</div>
<div class="b" style="left:253px;letter-spacing:-0.650px;">deb</div>
<div class="b" style="left:311.5px;letter-spacing:-0.300px;">10,0 M</div>
<div class="b" style="left:376px;letter-spacing:-0.220px;">06.11.19 21:4...</div>
<div class="b" style="left:513px;letter-spacing:-0.222px;">-rw-r--r--</div>
</div>
<div class="t" style="left:963px;top:987px;letter-spacing:-0.174px;">Vybráno: 0 z 10,0 M, souborů: 0 z 1, složek: 0 z 11</div>
<div style="left:0px;top:1003px;width:958px;height:1px;background:#000;"></div>
<div style="left:961px;top:1003px;width:959px;height:1px;background:#000;"></div>
<svg style="left:40px;top:420px;" width="70" height="160" viewBox="40 420 70 160"><path d="M92.3,572.5 L62,452.5" stroke="#ff0000" stroke-width="3.2" stroke-linecap="round" fill="none"/><path d="M55.2,428.5 L55.2,457 L61.8,451.2 L69.3,452.8 Z" fill="#ff0000"/></svg>
<div style="left:50px;top:578px;width:653px;height:59px;background:#ffffcc;border:2px solid #ff0000;box-shadow:3px 3px 5px rgba(0,0,0,0.65);"></div>
<div class="t an" style="left:62.5px;top:586.5px;letter-spacing:0.565px;">1. Sem jsem stáhnul WSJTX ze stránek autora.</div>
<div class="t an" style="left:62.5px;top:605.5px;letter-spacing:0.605px;">2. Kliknul pravým tlačítkem a nainstaloval instalátorem GDebi - viz další obrázky.</div>
<div class="t" style="left:0px;top:1011px;letter-spacing:-0.156px;">[/home/linaro/]$:</div>
<div style="left:110px;top:1006px;width:1785px;height:27px;background:#fff;border:1px solid #9c9a94;border-right-color:#fff;border-bottom-color:#fff;"></div>
<div style="left:111px;top:1007px;width:1783px;height:25px;background:#fff;border:1px solid #000;border-right-color:#dcdad5;border-bottom-color:#dcdad5;"></div>
<div style="left:1895px;top:1006px;width:25px;height:27px;background:#dcdad5;border-top:1px solid #fff;border-left:1px solid #fff;border-right:1px solid #000;border-bottom:1px solid #000;"></div><div style="left:1896px;top:1007px;width:23px;height:25px;border-right:1px solid #9c9a94;border-bottom:1px solid #9c9a94;"></div><svg style="left:1902px;top:1016px;" width="10" height="6" viewBox="0 0 10 6"><path d="M0.3,0.5 H9.7 L5,5.6 Z" fill="#000"/></svg>
<div class="t" style="left:82.3px;top:1037px;letter-spacing:-0.050px;">Zobrazit F3</div>
<div class="t" style="left:320px;top:1037px;letter-spacing:-0.367px;">Upravit F4</div>
<div class="t" style="left:549.5px;top:1037px;letter-spacing:-0.227px;">Kopírovat F5</div>
<div class="t" style="left:792.8px;top:1037px;letter-spacing:-0.045px;">Přesunout F6</div>
<div class="t" style="left:1042.5px;top:1037px;letter-spacing:-0.167px;">Adresář F7</div>
<div class="t" style="left:1276px;top:1037px;letter-spacing:-0.078px;">Vymazat F8</div>
<div class="t" style="left:1517.5px;top:1037px;letter-spacing:-0.320px;">Terminál F9</div>
<div class="t" style="left:1751.5px;top:1037px;letter-spacing:-0.083px;">Ukončit Alt+X</div>
<div style="left:0;top:1053px;width:1920px;height:1px;background:#efede9;"></div>
<div style="left:0;top:1054px;width:1920px;height:26px;background:linear-gradient(#000 0,#000 1px,#717171 1px,#4c4c4c 6px,#0c0c0c 11.5px,#000 12.5px,#000 15px,#2e2e2e 19.5px,#5e5e5e 26px);"></div>
<svg style="left:2px;top:1054px;" width="36" height="26" viewBox="0 0 36 26"><defs><linearGradient id="lx_14" x1="0" y1="0" x2="1" y2="0"><stop offset="0" stop-color="#8a8a8a"/><stop offset="0.6" stop-color="#f2f2f2"/><stop offset="1" stop-color="#7c7c7c"/></linearGradient></defs><path d="M2.5,16 L23,1.8 Q27,10 31.5,25.5 L29.5,25.5 Q25,13 20,7.5 L8,22.5 L13.5,11.5 L5.5,19.5 L12,10.6 Z" fill="url(#lx_14)"/></svg>
<svg style="left:39px;top:1056px;" width="18" height="21" viewBox="0 0 18 21"><defs><linearGradient id="fc_15" x1="0" y1="0" x2="0" y2="1"><stop offset="0" stop-color="#f4f4f4"/><stop offset="1" stop-color="#cfcfcf"/></linearGradient></defs><path d="M2,0.5 H16 L17.5,2 V20.5 H0.5 V2 Z" fill="url(#fc_15)" stroke="#bdbdbd" stroke-width="0.8"/><rect x="2.2" y="4" width="13.6" height="6.4" fill="#dedede" stroke="#5a5a5a" stroke-width="1"/><rect x="2.2" y="11.6" width="13.6" height="6.6" fill="#dedede" stroke="#5a5a5a" stroke-width="1"/><path d="M5.6,5.8 V7.6 H12.4 V5.8" fill="none" stroke="#fff" stroke-width="1.4"/><path d="M5.6,13.4 V15.2 H12.4 V13.4" fill="none" stroke="#fff" stroke-width="1.4"/></svg>
<svg style="left:64px;top:1056px;" width="21" height="22" viewBox="0 0 21 22"><defs><radialGradient id="gl_16" cx="0.4" cy="0.35" r="0.7"><stop offset="0" stop-color="#ffffff"/><stop offset="0.6" stop-color="#c9d9ec"/><stop offset="1" stop-color="#2c5fa8"/></radialGradient></defs><circle cx="10.5" cy="10.8" r="9.8" fill="url(#gl_16)" stroke="#1f4e96" stroke-width="0.9"/><path d="M11,12.5 h4 v6 q-3,1.6 -5,0.4 z" fill="#2457a4"/><path d="M13.5,3 q4,1.4 5,6 l-2.6,4 l-2,-3.6 l1.6,-2.8 z" fill="#f3f0ea" opacity="0.9"/><path d="M4,4.6 q3,-3 7,-2.6 l-1,3.2 l-3.4,1.4 l-1.6,3 l-2.6,-1 z" fill="#f5f5f5" opacity="0.9"/><path d="M9.4,6.4 L9.4,19.6 L6.6,16.2 L4.2,20.6 L2.6,19.6 L5,15.4 L1.2,14.6 Z" fill="#fff" stroke="#222" stroke-width="0.7" stroke-linejoin="round" transform="rotate(18 6 13)"/></svg>
<svg style="left:95px;top:1058px;" width="20" height="18" viewBox="0 0 20 18"><rect x="5.8" y="4.4" width="13.6" height="12.6" fill="#e9e9e9" stroke="#fff" stroke-width="1.2"/><rect x="5.2" y="3.8" width="14.8" height="2.2" fill="#2b5fad"/><rect x="0.8" y="0.8" width="13.4" height="12.4" fill="#e3e3e3" stroke="#fff" stroke-width="1.2"/><rect x="0.2" y="0.2" width="14.6" height="2.2" fill="#2b5fad"/></svg>
<div style="left:123px;top:1056px;width:39px;height:22px;background:#5d8bb8;border:1px solid #fff;"></div>
<svg style="left:134.5px;top:1059px;" width="16" height="14.5" viewBox="0 0 20 20" preserveAspectRatio="none"><defs><linearGradient id="dc2g_17" x1="0" y1="0" x2="0" y2="1"><stop offset="0" stop-color="#ea7a63"/><stop offset="0.5" stop-color="#e2583c"/><stop offset="1" stop-color="#d2381c"/></linearGradient><clipPath id="dc2c_17"><rect x="0" y="0" width="20" height="20" rx="1.8"/></clipPath></defs><g clip-path="url(#dc2c_17)"><rect x="0" y="0" width="20" height="20" fill="url(#dc2g_17)"/><path d="M0,20 L10,8.5 L20,20 Z" fill="#c22e14" opacity="0.85"/><path d="M10,0 V8.5" stroke="#d86a55" stroke-width="3" opacity="0.5"/><circle cx="2.6" cy="10.4" r="5.7" fill="none" stroke="#ece8e4" stroke-width="2"/><circle cx="17.6" cy="10.4" r="5.7" fill="none" stroke="#ece8e4" stroke-width="2"/></g></svg>
<div style="left:163px;top:1056px;width:39px;height:22px;background:#9e9a93;"></div>
<div style="left:208px;top:1055px;width:149px;height:24px;background:#dcdad5;border-top:1px solid #fff;border-left:1px solid #fff;border-right:1px solid #6a6863;border-bottom:1px solid #6a6863;"></div>
<div style="left:357px;top:1055px;width:2px;height:25px;background:#000;"></div>
<div style="left:359px;top:1055px;width:149px;height:24px;background:#dcdad5;border-top:1px solid #fff;border-left:1px solid #fff;border-right:1px solid #6a6863;border-bottom:1px solid #6a6863;"></div>
<div style="left:508px;top:1055px;width:2px;height:25px;background:#000;"></div>
<div style="left:510px;top:1055px;width:150px;height:25px;background:#c6c4bf;border-top:1px solid #000;border-left:1px solid #000;border-right:1px solid #fff;"></div>
<svg style="left:211px;top:1058px;" width="18" height="17" viewBox="0 0 18 17"><defs><linearGradient id="wi_18" x1="0" y1="0" x2="0" y2="1"><stop offset="0" stop-color="#f2f2f2"/><stop offset="1" stop-color="#cfcfcf"/></linearGradient></defs><rect x="0.5" y="0.5" width="17" height="16" fill="url(#wi_18)" stroke="#c9d6e8" stroke-width="1"/><rect x="0" y="0" width="18" height="4" fill="#4a7ab8"/><rect x="0" y="3.2" width="18" height="1" fill="#6d97cc"/><rect x="0" y="15.6" width="18" height="1.4" fill="#5a88c4"/></svg>
<svg style="left:362px;top:1058px;" width="18" height="17" viewBox="0 0 18 17"><defs><linearGradient id="wi_19" x1="0" y1="0" x2="0" y2="1"><stop offset="0" stop-color="#f2f2f2"/><stop offset="1" stop-color="#cfcfcf"/></linearGradient></defs><rect x="0.5" y="0.5" width="17" height="16" fill="url(#wi_19)" stroke="#c9d6e8" stroke-width="1"/><rect x="0" y="0" width="18" height="4" fill="#4a7ab8"/><rect x="0" y="3.2" width="18" height="1" fill="#6d97cc"/><rect x="0" y="15.6" width="18" height="1.4" fill="#5a88c4"/></svg>
<svg style="left:512px;top:1057px;" width="20" height="20" viewBox="0 0 20 20" preserveAspectRatio="none"><defs><linearGradient id="dc3g_20" x1="0" y1="0" x2="0" y2="1"><stop offset="0" stop-color="#ea7a63"/><stop offset="0.5" stop-color="#e2583c"/><stop offset="1" stop-color="#d2381c"/></linearGradient><clipPath id="dc3c_20"><rect x="1" y="1" width="18" height="18" rx="1.8"/></clipPath></defs><rect x="0" y="0" width="20" height="20" fill="#0a0202"/><g clip-path="url(#dc3c_20)"><rect x="0" y="0" width="20" height="20" fill="url(#dc3g_20)"/><path d="M0,20 L10,8.5 L20,20 Z" fill="#c22e14" opacity="0.85"/><path d="M10,0 V8.5" stroke="#d86a55" stroke-width="3" opacity="0.5"/><circle cx="2.6" cy="10.4" r="5.7" fill="none" stroke="#ece8e4" stroke-width="2"/><circle cx="17.6" cy="10.4" r="5.7" fill="none" stroke="#ece8e4" stroke-width="2"/></g></svg>
<svg style="left:1706px;top:1056px;" width="36" height="22" viewBox="0 0 36 22"><rect width="36" height="22" fill="#000"/><rect x="0" y="20.76" width="0.8" height="1.24" fill="#0c9a0c"/><rect x="0.8" y="20.76" width="0.8" height="1.24" fill="#0c9a0c"/><rect x="1.6" y="20.14" width="0.8" height="1.86" fill="#0c9a0c"/><rect x="2.4" y="20.76" width="0.8" height="1.24" fill="#0c9a0c"/><rect x="3.2" y="19.52" width="0.8" height="2.48" fill="#0c9a0c"/><rect x="4" y="20.14" width="0.8" height="1.86" fill="#0c9a0c"/><rect x="4.8" y="20.76" width="0.8" height="1.24" fill="#0c9a0c"/><rect x="5.6" y="20.14" width="0.8" height="1.86" fill="#0c9a0c"/><rect x="6.4" y="18.9" width="0.8" height="3.1" fill="#0c9a0c"/><rect x="7.2" y="18.28" width="0.8" height="3.72" fill="#0c9a0c"/><rect x="8" y="17.04" width="0.8" height="4.96" fill="#0c9a0c"/><rect x="8.8" y="18.28" width="0.8" height="3.72" fill="#0c9a0c"/><rect x="9.6" y="18.9" width="0.8" height="3.1" fill="#0c9a0c"/><rect x="10.4" y="17.66" width="0.8" height="4.34" fill="#0c9a0c"/><rect x="11.2" y="20.14" width="0.8" height="1.86" fill="#0c9a0c"/><rect x="12" y="20.76" width="0.8" height="1.24" fill="#0c9a0c"/><rect x="12.8" y="18.9" width="0.8" height="3.1" fill="#0c9a0c"/><rect x="13.6" y="17.66" width="0.8" height="4.34" fill="#0c9a0c"/><rect x="14.4" y="18.9" width="0.8" height="3.1" fill="#0c9a0c"/><rect x="15.2" y="19.52" width="0.8" height="2.48" fill="#0c9a0c"/><rect x="16" y="18.9" width="0.8" height="3.1" fill="#0c9a0c"/><rect x="16.8" y="18.28" width="0.8" height="3.72" fill="#0c9a0c"/><rect x="17.6" y="18.28" width="0.8" height="3.72" fill="#0c9a0c"/><rect x="18.4" y="18.9" width="0.8" height="3.1" fill="#0c9a0c"/><rect x="19.2" y="17.66" width="0.8" height="4.34" fill="#0c9a0c"/><rect x="20" y="18.28" width="0.8" height="3.72" fill="#0c9a0c"/><rect x="20.8" y="16.42" width="0.8" height="5.58" fill="#0c9a0c"/><rect x="21.6" y="15.18" width="0.8" height="6.82" fill="#0c9a0c"/><rect x="22.4" y="18.9" width="0.8" height="3.1" fill="#0c9a0c"/><rect x="23.2" y="20.14" width="0.8" height="1.86" fill="#0c9a0c"/><rect x="24" y="20.76" width="0.8" height="1.24" fill="#0c9a0c"/><rect x="24.8" y="20.14" width="0.8" height="1.86" fill="#0c9a0c"/><rect x="25.6" y="19.52" width="0.8" height="2.48" fill="#0c9a0c"/><rect x="26.4" y="18.9" width="0.8" height="3.1" fill="#0c9a0c"/><rect x="27.2" y="16.42" width="0.8" height="5.58" fill="#0c9a0c"/><rect x="28" y="15.8" width="0.8" height="6.2" fill="#0c9a0c"/><rect x="28.8" y="17.66" width="0.8" height="4.34" fill="#0c9a0c"/><rect x="29.6" y="18.28" width="0.8" height="3.72" fill="#0c9a0c"/><rect x="30.4" y="18.9" width="0.8" height="3.1" fill="#0c9a0c"/><rect x="31.2" y="18.28" width="0.8" height="3.72" fill="#0c9a0c"/><rect x="32" y="18.9" width="0.8" height="3.1" fill="#0c9a0c"/><rect x="32.8" y="19.52" width="0.8" height="2.48" fill="#0c9a0c"/><rect x="33.6" y="20.14" width="0.8" height="1.86" fill="#0c9a0c"/><rect x="34.4" y="20.76" width="0.8" height="1.24" fill="#0c9a0c"/><rect x="35.2" y="20.76" width="0.8" height="1.24" fill="#0c9a0c"/></svg>
<svg style="left:1745px;top:1056px;" width="24" height="22" viewBox="0 0 24 22"><defs><linearGradient id="sp_21" x1="0" y1="0" x2="1" y2="0"><stop offset="0" stop-color="#9a9a9a"/><stop offset="0.7" stop-color="#ffffff"/><stop offset="1" stop-color="#b4b4b4"/></linearGradient></defs><path d="M1.6,8 H4.4 L9.4,2.4 H10.4 V19.6 H9.4 L4.4,14 H1.6 Z" fill="url(#sp_21)" stroke="#8c8c8c" stroke-width="0.5"/><path d="M13.4,8.6 Q15.4,11 13.4,13.6" stroke="#3d6fb4" stroke-width="1.2" fill="none"/><path d="M15.4,6 Q19,11 15.4,16.2" stroke="#3d6fb4" stroke-width="1.2" fill="none"/><path d="M17.6,3.4 Q23,11 17.6,18.8" stroke="#3d6fb4" stroke-width="1.2" fill="none"/></svg>
<svg style="left:1772px;top:1058px;" width="20" height="20" viewBox="0 0 20 20"><rect x="0.6" y="11.6" width="4.2" height="7" rx="0.6" fill="#3f72b8" stroke="#1c1c1c" stroke-width="0.8"/><rect x="5.4" y="8.6" width="4.2" height="10" rx="0.6" fill="#3f72b8" stroke="#1c1c1c" stroke-width="0.8"/><rect x="10.2" y="5.4" width="4.2" height="13.2" rx="0.6" fill="#f4f4f4" stroke="#1c1c1c" stroke-width="0.8"/><rect x="15" y="1.6" width="4.2" height="17" rx="0.6" fill="#f4f4f4" stroke="#1c1c1c" stroke-width="0.8"/></svg>
<svg style="left:1799px;top:1055px;" width="18" height="25" viewBox="0 0 18 25"><ellipse cx="9" cy="12.4" rx="8.4" ry="12" fill="#3f7ec8"/><path d="M4.2,7.6 L13,16 L8.8,20 V4.4 L13,8.4 L4.2,17" fill="none" stroke="#fff" stroke-width="1.6" stroke-linejoin="miter"/></svg>
<svg style="left:1867px;top:1056px;" width="23" height="21" viewBox="0 0 23 21"><rect x="1.2" y="1.2" width="20.6" height="13" fill="#8e8e8e" stroke="#d4d4d4" stroke-width="1.6"/><rect x="3.4" y="3.2" width="16.2" height="9" fill="#a9a9a9" stroke="#c8c8c8" stroke-width="0.6"/><circle cx="11.8" cy="6.8" r="6.4" fill="#dcdcdc"/><circle cx="11.8" cy="6.6" r="4.8" fill="#e8b21e" stroke="#f3d774" stroke-width="0.8"/><path d="M11.4,3.8 q1.6,0.2 0.8,1.6 q-1.2,1 0,2 q0.8,1 -0.6,1.8" stroke="#000" stroke-width="1.3" fill="none"/><path d="M10,14.6 h3.6 v2.2 h-3.6 z" fill="#d0d0d0"/><rect x="7" y="16.8" width="9.6" height="1.4" fill="#fafafa"/><rect x="7" y="18.2" width="9.6" height="1" fill="#9a9a9a"/></svg>
<svg style="left:1895px;top:1055px;" width="23" height="22" viewBox="0 0 23 22"><rect x="0.5" y="0.5" width="22" height="21" fill="#5aa818" stroke="#4a9010" stroke-width="1"/><rect x="4.4" y="2.2" width="12.6" height="18" fill="#fff"/><rect x="1.6" y="2" width="2" height="18" fill="#6cb82a"/><rect x="18" y="2" width="3.4" height="18" fill="#4f9c12"/><circle cx="13.6" cy="4.6" r="1.7" fill="#5aa818"/><path d="M12.4,6.6 L9,7.4 L7,10.4 M12.4,6.6 L11,11.6 L13.8,14.6 L13.2,19.6 M11,11.6 L8.4,15.2 L4.6,15.8 M12.8,7.4 L15,10 L17.4,9.6" stroke="#5aa818" stroke-width="1.7" fill="none" stroke-linecap="round" stroke-linejoin="round"/></svg>
<div class="tk" style="left:231px;top:1059px;letter-spacing:0.1px;">WSJT-X - Wide Gr...</div>
<div class="tk" style="left:382px;top:1059px;">WSJT-X</div>
<div class="tk" style="left:440px;top:1059px;">v2.0.1</div>
<div class="tk" style="left:492px;top:1059px;">...</div>
<div class="tk" style="left:533px;top:1059px;">Double Comman...</div>
<div class="tk" style="left:1826px;top:1059px;color:#fff;">18:35</div>
</div>
</body></html>
